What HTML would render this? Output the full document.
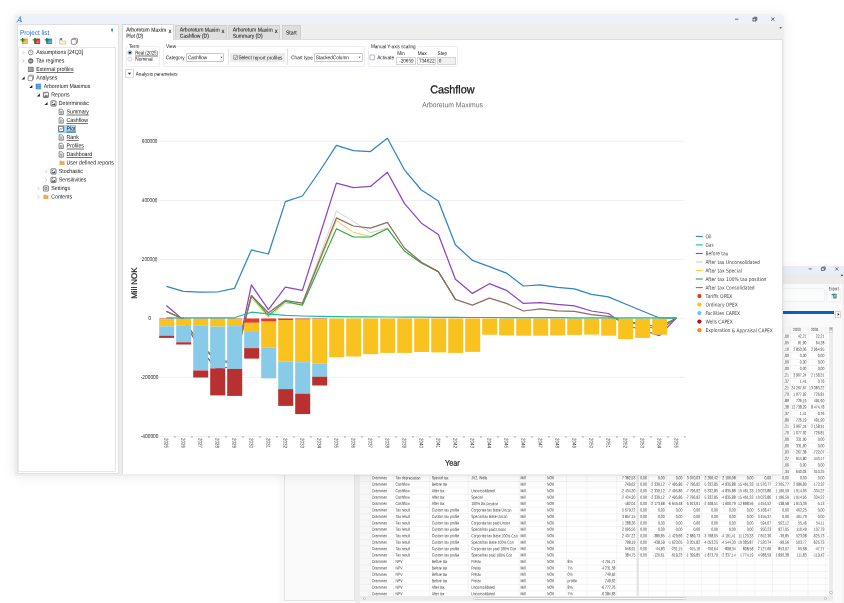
<!DOCTYPE html>
<html lang="en"><head><meta charset="utf-8"><title>Cashflow - Arboretum Maximus</title>
<style>
html,body{margin:0;padding:0;background:#fff;}
body{width:844px;height:603px;position:relative;overflow:hidden;font-family:"Liberation Sans",sans-serif;}
.a{position:absolute;box-sizing:border-box;}
.t{position:absolute;left:0;top:0;white-space:nowrap;transform-origin:0 0;}
#root{position:absolute;left:0;top:0;width:844px;height:603px;overflow:hidden;}
.tl{position:absolute;left:0;top:0;width:844px;height:603px;mix-blend-mode:multiply;}
svg{position:absolute;left:0;top:0;overflow:visible;}
</style></head>
<body>
<div id="root">
<div class="a" id="win2" style="left:281.4px;top:266.0px;width:566.6px;height:345px;background:#f3f3f3;border:0.6px solid #d4d4d4;box-shadow:0 0 8px rgba(0,0,0,0.04);"></div>
<div class="a " style="left:281.40px;top:266.00px;width:566.60px;height:6.70px;background:#e9eff8;"></div>
<div class="a " style="left:281.40px;top:272.70px;width:566.60px;height:11.00px;background:#ececec;"></div>
<div class="a " style="left:281.40px;top:283.70px;width:566.60px;height:330.00px;background:#fafafa;"></div>
<svg width="844" height="603" viewBox="0 0 844 603"><g stroke="#444" stroke-width="0.7" fill="none"><line x1="808.6" y1="268.9" x2="811.8" y2="268.9"/><rect x="821.6" y="267.9" width="2.6" height="2.6"/><path d="M822.6 267.9v-0.9h2.6v2.6h-1"/><path d="M835.2 267.3l3.2 3.2M838.4 267.3l-3.2 3.2"/></g><path d="M840.6 274.8h2.6l-1.3 1.6z" fill="#333"/></svg>
<svg width="844" height="603" viewBox="0 0 844 603"><rect x="600" y="288.6" width="224.5" height="12.8" rx="1.5" fill="#fcfcfc" stroke="#e8ecf1" stroke-width="0.7"/><rect x="826.7" y="289.2" width="13.8" height="12.6" rx="1.5" fill="#fcfcfc" stroke="#e8ecf1" stroke-width="0.7"/><rect x="828.2" y="286.5" width="11" height="5" fill="#fafafa"/><rect x="842.6" y="283.7" width="0.7" height="330" fill="#e8e8e8"/><rect x="831.0" y="293.2" width="5.8" height="5.6" rx="0.4" fill="#f1f1f1"/><rect x="833.2" y="293.8" width="3.4" height="4.6" fill="#2f9a5a"/><path d="M833.9 294.8l2 2.6M835.9 294.8l-2 2.6" stroke="#e9f5ee" stroke-width="0.5"/><path d="M831.2 294.6l2.4 -1.2v2.4z" fill="#2f6fd0"/></svg>
<div class="a " style="left:600.00px;top:311.00px;width:233.70px;height:3.10px;background:#0a5fc4;"></div>
<div class="a " style="left:835.00px;top:311.00px;width:6.20px;height:6.60px;background:#fdfdfd;border:0.6px solid #d2d2d2;border-radius:0.6px;"></div>
<svg width="844" height="603" viewBox="0 0 844 603"><path d="M837.6 312.9l2 1.4l-2 1.4z" fill="#333"/></svg>
<div class="a " style="left:360.40px;top:326.50px;width:468.30px;height:270.90px;background:#ffffff;"></div>
<div class="a " style="left:360.40px;top:326.50px;width:468.30px;height:6.80px;background:#f8f8f8;"></div>
<div class="a " style="left:360.40px;top:326.50px;width:10.30px;height:270.90px;background:#f7f7f7;"></div>
<svg width="844" height="603" viewBox="0 0 844 603"><g stroke="#e6e6e6" stroke-width="0.45"><line x1="360.4" y1="333.48" x2="828.7" y2="333.48"/><line x1="360.4" y1="339.92" x2="828.7" y2="339.92"/><line x1="360.4" y1="346.35" x2="828.7" y2="346.35"/><line x1="360.4" y1="352.79" x2="828.7" y2="352.79"/><line x1="360.4" y1="359.22" x2="828.7" y2="359.22"/><line x1="360.4" y1="365.66" x2="828.7" y2="365.66"/><line x1="360.4" y1="372.09" x2="828.7" y2="372.09"/><line x1="360.4" y1="378.53" x2="828.7" y2="378.53"/><line x1="360.4" y1="384.96" x2="828.7" y2="384.96"/><line x1="360.4" y1="391.40" x2="828.7" y2="391.40"/><line x1="360.4" y1="397.83" x2="828.7" y2="397.83"/><line x1="360.4" y1="404.27" x2="828.7" y2="404.27"/><line x1="360.4" y1="410.70" x2="828.7" y2="410.70"/><line x1="360.4" y1="417.14" x2="828.7" y2="417.14"/><line x1="360.4" y1="423.57" x2="828.7" y2="423.57"/><line x1="360.4" y1="430.01" x2="828.7" y2="430.01"/><line x1="360.4" y1="436.44" x2="828.7" y2="436.44"/><line x1="360.4" y1="442.88" x2="828.7" y2="442.88"/><line x1="360.4" y1="449.31" x2="828.7" y2="449.31"/><line x1="360.4" y1="455.75" x2="828.7" y2="455.75"/><line x1="360.4" y1="462.18" x2="828.7" y2="462.18"/><line x1="360.4" y1="468.62" x2="828.7" y2="468.62"/><line x1="360.4" y1="475.05" x2="828.7" y2="475.05"/><line x1="360.4" y1="481.49" x2="828.7" y2="481.49"/><line x1="360.4" y1="487.92" x2="828.7" y2="487.92"/><line x1="360.4" y1="494.36" x2="828.7" y2="494.36"/><line x1="360.4" y1="500.79" x2="828.7" y2="500.79"/><line x1="360.4" y1="507.23" x2="828.7" y2="507.23"/><line x1="360.4" y1="513.66" x2="828.7" y2="513.66"/><line x1="360.4" y1="520.10" x2="828.7" y2="520.10"/><line x1="360.4" y1="526.53" x2="828.7" y2="526.53"/><line x1="360.4" y1="532.97" x2="828.7" y2="532.97"/><line x1="360.4" y1="539.40" x2="828.7" y2="539.40"/><line x1="360.4" y1="545.84" x2="828.7" y2="545.84"/><line x1="360.4" y1="552.27" x2="828.7" y2="552.27"/><line x1="360.4" y1="558.71" x2="828.7" y2="558.71"/><line x1="360.4" y1="565.14" x2="828.7" y2="565.14"/><line x1="360.4" y1="571.58" x2="828.7" y2="571.58"/><line x1="360.4" y1="578.01" x2="828.7" y2="578.01"/><line x1="360.4" y1="584.45" x2="828.7" y2="584.45"/><line x1="360.4" y1="590.88" x2="828.7" y2="590.88"/><line x1="360.4" y1="597.32" x2="828.7" y2="597.32"/><line x1="370.70" y1="326.5" x2="370.70" y2="597.40"/><line x1="393.60" y1="326.5" x2="393.60" y2="597.40"/><line x1="429.60" y1="326.5" x2="429.60" y2="597.40"/><line x1="468.30" y1="326.5" x2="468.30" y2="597.40"/><line x1="519.00" y1="326.5" x2="519.00" y2="597.40"/><line x1="545.80" y1="326.5" x2="545.80" y2="597.40"/><line x1="566.50" y1="326.5" x2="566.50" y2="597.40"/><line x1="586.90" y1="326.5" x2="586.90" y2="597.40"/><line x1="616.70" y1="326.5" x2="616.70" y2="597.40"/><line x1="648.40" y1="326.5" x2="648.40" y2="597.40"/><line x1="666.14" y1="326.5" x2="666.14" y2="597.40"/><line x1="683.88" y1="326.5" x2="683.88" y2="597.40"/><line x1="701.62" y1="326.5" x2="701.62" y2="597.40"/><line x1="719.36" y1="326.5" x2="719.36" y2="597.40"/><line x1="737.10" y1="326.5" x2="737.10" y2="597.40"/><line x1="754.84" y1="326.5" x2="754.84" y2="597.40"/><line x1="772.58" y1="326.5" x2="772.58" y2="597.40"/><line x1="790.32" y1="326.5" x2="790.32" y2="597.40"/><line x1="808.06" y1="326.5" x2="808.06" y2="597.40"/><line x1="825.80" y1="326.5" x2="825.80" y2="597.40"/></g><rect x="636.6" y="326.5" width="2.2" height="270.90" fill="#e3e3e3"/></svg>
<div class="a " style="left:828.90px;top:326.50px;width:4.30px;height:270.00px;background:#ececec;"></div>
<div class="a " style="left:829.10px;top:326.70px;width:3.90px;height:3.40px;background:#fdfdfd;border:0.5px solid #c8c8c8;"></div>
<div class="a " style="left:829.10px;top:330.30px;width:3.90px;height:2.60px;background:#fdfdfd;border:0.5px solid #d8d8d8;"></div>
<svg width="844" height="603" viewBox="0 0 844 603"><path d="M830.2 328l1.8 0l-0.9 1.1z" fill="#444"/></svg>
<div class="a " style="left:829.30px;top:590.60px;width:3.60px;height:3.60px;background:#fdfdfd;border:0.5px solid #bdbdbd;border-radius:2px;"></div>
<div class="a " style="left:360.40px;top:596.40px;width:472.80px;height:4.60px;background:#ececec;"></div>
<div class="a " style="left:362.60px;top:596.60px;width:3.60px;height:3.60px;background:#fdfdfd;border:0.5px solid #bdbdbd;border-radius:2px;"></div>
<div class="a " style="left:823.80px;top:596.60px;width:3.60px;height:3.60px;background:#fdfdfd;border:0.5px solid #bdbdbd;border-radius:2px;"></div>
<div class="a " style="left:473.30px;top:597.00px;width:212.40px;height:3.40px;background:#fbfbfb;border:0.5px solid #cfcfcf;border-radius:1.5px;"></div>
<div class="a " style="left:284.20px;top:283.70px;width:70.60px;height:317.00px;background:#fafafa;border:0.6px solid #e2e2e2;"></div>
<div class="a " style="left:354.80px;top:283.70px;width:5.60px;height:330.00px;background:#ececec;"></div>
<div class="tl"><span class="t" style="font-size:4.8px;line-height:4.8px;color:#222;transform:translate(828.70px,287.34px) rotate(0.2deg) scaleX(0.7208);">Export</span>
<span class="t" style="font-size:4.5px;line-height:4.5px;color:#3a3a3a;transform:translate(793.00px,327.96px) rotate(0.2deg) scaleX(0.7600);">2033</span>
<span class="t" style="font-size:4.5px;line-height:4.5px;color:#3a3a3a;transform:translate(810.90px,327.96px) rotate(0.2deg) scaleX(0.7600);">2034</span>
<span class="t" style="font-size:4.5px;line-height:4.5px;color:#3a3a3a;transform:translate(784.05px,334.76px) rotate(0.2deg) scaleX(0.7600);">,00</span>
<span class="t" style="font-size:4.5px;line-height:4.5px;color:#3a3a3a;transform:translate(797.94px,334.76px) rotate(0.2deg) scaleX(0.7600);">42,27</span>
<span class="t" style="font-size:4.5px;line-height:4.5px;color:#3a3a3a;transform:translate(815.74px,334.76px) rotate(0.2deg) scaleX(0.7600);">22,21</span>
<span class="t" style="font-size:4.5px;line-height:4.5px;color:#3a3a3a;transform:translate(784.05px,341.20px) rotate(0.2deg) scaleX(0.7600);">,05</span>
<span class="t" style="font-size:4.5px;line-height:4.5px;color:#3a3a3a;transform:translate(797.94px,341.20px) rotate(0.2deg) scaleX(0.7600);">91,90</span>
<span class="t" style="font-size:4.5px;line-height:4.5px;color:#3a3a3a;transform:translate(815.74px,341.20px) rotate(0.2deg) scaleX(0.7600);">64,28</span>
<span class="t" style="font-size:4.5px;line-height:4.5px;color:#3a3a3a;transform:translate(784.05px,347.63px) rotate(0.2deg) scaleX(0.7600);">,10</span>
<span class="t" style="font-size:4.5px;line-height:4.5px;color:#3a3a3a;transform:translate(793.19px,347.63px) rotate(0.2deg) scaleX(0.7600);">2 850,06</span>
<span class="t" style="font-size:4.5px;line-height:4.5px;color:#3a3a3a;transform:translate(810.99px,347.63px) rotate(0.2deg) scaleX(0.7600);">2 964,95</span>
<span class="t" style="font-size:4.5px;line-height:4.5px;color:#3a3a3a;transform:translate(784.05px,354.07px) rotate(0.2deg) scaleX(0.7600);">,00</span>
<span class="t" style="font-size:4.5px;line-height:4.5px;color:#3a3a3a;transform:translate(799.84px,354.07px) rotate(0.2deg) scaleX(0.7600);">0,00</span>
<span class="t" style="font-size:4.5px;line-height:4.5px;color:#3a3a3a;transform:translate(817.64px,354.07px) rotate(0.2deg) scaleX(0.7600);">0,00</span>
<span class="t" style="font-size:4.5px;line-height:4.5px;color:#3a3a3a;transform:translate(784.05px,360.50px) rotate(0.2deg) scaleX(0.7600);">,00</span>
<span class="t" style="font-size:4.5px;line-height:4.5px;color:#3a3a3a;transform:translate(799.84px,360.50px) rotate(0.2deg) scaleX(0.7600);">0,00</span>
<span class="t" style="font-size:4.5px;line-height:4.5px;color:#3a3a3a;transform:translate(817.64px,360.50px) rotate(0.2deg) scaleX(0.7600);">0,00</span>
<span class="t" style="font-size:4.5px;line-height:4.5px;color:#3a3a3a;transform:translate(784.05px,366.94px) rotate(0.2deg) scaleX(0.7600);">,00</span>
<span class="t" style="font-size:4.5px;line-height:4.5px;color:#3a3a3a;transform:translate(799.84px,366.94px) rotate(0.2deg) scaleX(0.7600);">0,00</span>
<span class="t" style="font-size:4.5px;line-height:4.5px;color:#3a3a3a;transform:translate(817.64px,366.94px) rotate(0.2deg) scaleX(0.7600);">0,00</span>
<span class="t" style="font-size:4.5px;line-height:4.5px;color:#3a3a3a;transform:translate(784.05px,373.38px) rotate(0.2deg) scaleX(0.7600);">,21</span>
<span class="t" style="font-size:4.5px;line-height:4.5px;color:#3a3a3a;transform:translate(793.19px,373.38px) rotate(0.2deg) scaleX(0.7600);">3 967,24</span>
<span class="t" style="font-size:4.5px;line-height:4.5px;color:#3a3a3a;transform:translate(810.99px,373.38px) rotate(0.2deg) scaleX(0.7600);">2 158,31</span>
<span class="t" style="font-size:4.5px;line-height:4.5px;color:#3a3a3a;transform:translate(784.05px,379.81px) rotate(0.2deg) scaleX(0.7600);">,37</span>
<span class="t" style="font-size:4.5px;line-height:4.5px;color:#3a3a3a;transform:translate(799.84px,379.81px) rotate(0.2deg) scaleX(0.7600);">1,41</span>
<span class="t" style="font-size:4.5px;line-height:4.5px;color:#3a3a3a;transform:translate(817.64px,379.81px) rotate(0.2deg) scaleX(0.7600);">0,76</span>
<span class="t" style="font-size:4.5px;line-height:4.5px;color:#3a3a3a;transform:translate(784.05px,386.25px) rotate(0.2deg) scaleX(0.7600);">,21</span>
<span class="t" style="font-size:4.5px;line-height:4.5px;color:#3a3a3a;transform:translate(791.29px,386.25px) rotate(0.2deg) scaleX(0.7600);">24 267,67</span>
<span class="t" style="font-size:4.5px;line-height:4.5px;color:#3a3a3a;transform:translate(809.09px,386.25px) rotate(0.2deg) scaleX(0.7600);">13 083,22</span>
<span class="t" style="font-size:4.5px;line-height:4.5px;color:#3a3a3a;transform:translate(784.05px,392.68px) rotate(0.2deg) scaleX(0.7600);">,70</span>
<span class="t" style="font-size:4.5px;line-height:4.5px;color:#3a3a3a;transform:translate(793.19px,392.68px) rotate(0.2deg) scaleX(0.7600);">1 077,92</span>
<span class="t" style="font-size:4.5px;line-height:4.5px;color:#3a3a3a;transform:translate(813.84px,392.68px) rotate(0.2deg) scaleX(0.7600);">726,81</span>
<span class="t" style="font-size:4.5px;line-height:4.5px;color:#3a3a3a;transform:translate(784.05px,399.11px) rotate(0.2deg) scaleX(0.7600);">,89</span>
<span class="t" style="font-size:4.5px;line-height:4.5px;color:#3a3a3a;transform:translate(796.04px,399.11px) rotate(0.2deg) scaleX(0.7600);">726,19</span>
<span class="t" style="font-size:4.5px;line-height:4.5px;color:#3a3a3a;transform:translate(813.84px,399.11px) rotate(0.2deg) scaleX(0.7600);">491,90</span>
<span class="t" style="font-size:4.5px;line-height:4.5px;color:#3a3a3a;transform:translate(784.05px,405.55px) rotate(0.2deg) scaleX(0.7600);">,38</span>
<span class="t" style="font-size:4.5px;line-height:4.5px;color:#3a3a3a;transform:translate(791.29px,405.55px) rotate(0.2deg) scaleX(0.7600);">12 738,29</span>
<span class="t" style="font-size:4.5px;line-height:4.5px;color:#3a3a3a;transform:translate(810.99px,405.55px) rotate(0.2deg) scaleX(0.7600);">8 474,78</span>
<span class="t" style="font-size:4.5px;line-height:4.5px;color:#3a3a3a;transform:translate(784.05px,411.98px) rotate(0.2deg) scaleX(0.7600);">,37</span>
<span class="t" style="font-size:4.5px;line-height:4.5px;color:#3a3a3a;transform:translate(799.84px,411.98px) rotate(0.2deg) scaleX(0.7600);">1,41</span>
<span class="t" style="font-size:4.5px;line-height:4.5px;color:#3a3a3a;transform:translate(817.64px,411.98px) rotate(0.2deg) scaleX(0.7600);">0,76</span>
<span class="t" style="font-size:4.5px;line-height:4.5px;color:#3a3a3a;transform:translate(784.05px,418.42px) rotate(0.2deg) scaleX(0.7600);">,89</span>
<span class="t" style="font-size:4.5px;line-height:4.5px;color:#3a3a3a;transform:translate(796.04px,418.42px) rotate(0.2deg) scaleX(0.7600);">726,19</span>
<span class="t" style="font-size:4.5px;line-height:4.5px;color:#3a3a3a;transform:translate(813.84px,418.42px) rotate(0.2deg) scaleX(0.7600);">491,90</span>
<span class="t" style="font-size:4.5px;line-height:4.5px;color:#3a3a3a;transform:translate(784.05px,424.85px) rotate(0.2deg) scaleX(0.7600);">,21</span>
<span class="t" style="font-size:4.5px;line-height:4.5px;color:#3a3a3a;transform:translate(793.19px,424.85px) rotate(0.2deg) scaleX(0.7600);">3 967,24</span>
<span class="t" style="font-size:4.5px;line-height:4.5px;color:#3a3a3a;transform:translate(810.99px,424.85px) rotate(0.2deg) scaleX(0.7600);">2 158,31</span>
<span class="t" style="font-size:4.5px;line-height:4.5px;color:#3a3a3a;transform:translate(784.05px,431.29px) rotate(0.2deg) scaleX(0.7600);">,70</span>
<span class="t" style="font-size:4.5px;line-height:4.5px;color:#3a3a3a;transform:translate(793.19px,431.29px) rotate(0.2deg) scaleX(0.7600);">1 077,92</span>
<span class="t" style="font-size:4.5px;line-height:4.5px;color:#3a3a3a;transform:translate(813.84px,431.29px) rotate(0.2deg) scaleX(0.7600);">726,81</span>
<span class="t" style="font-size:4.5px;line-height:4.5px;color:#3a3a3a;transform:translate(784.05px,437.72px) rotate(0.2deg) scaleX(0.7600);">,00</span>
<span class="t" style="font-size:4.5px;line-height:4.5px;color:#3a3a3a;transform:translate(796.04px,437.72px) rotate(0.2deg) scaleX(0.7600);">331,90</span>
<span class="t" style="font-size:4.5px;line-height:4.5px;color:#3a3a3a;transform:translate(817.64px,437.72px) rotate(0.2deg) scaleX(0.7600);">0,00</span>
<span class="t" style="font-size:4.5px;line-height:4.5px;color:#3a3a3a;transform:translate(784.05px,444.16px) rotate(0.2deg) scaleX(0.7600);">,00</span>
<span class="t" style="font-size:4.5px;line-height:4.5px;color:#3a3a3a;transform:translate(796.04px,444.16px) rotate(0.2deg) scaleX(0.7600);">331,90</span>
<span class="t" style="font-size:4.5px;line-height:4.5px;color:#3a3a3a;transform:translate(817.64px,444.16px) rotate(0.2deg) scaleX(0.7600);">0,00</span>
<span class="t" style="font-size:4.5px;line-height:4.5px;color:#3a3a3a;transform:translate(784.05px,450.59px) rotate(0.2deg) scaleX(0.7600);">,93</span>
<span class="t" style="font-size:4.5px;line-height:4.5px;color:#3a3a3a;transform:translate(796.04px,450.59px) rotate(0.2deg) scaleX(0.7600);">267,38</span>
<span class="t" style="font-size:4.5px;line-height:4.5px;color:#3a3a3a;transform:translate(812.70px,450.59px) rotate(0.2deg) scaleX(0.7600);">-722,07</span>
<span class="t" style="font-size:4.5px;line-height:4.5px;color:#3a3a3a;transform:translate(784.05px,457.03px) rotate(0.2deg) scaleX(0.7600);">,27</span>
<span class="t" style="font-size:4.5px;line-height:4.5px;color:#3a3a3a;transform:translate(796.04px,457.03px) rotate(0.2deg) scaleX(0.7600);">914,80</span>
<span class="t" style="font-size:4.5px;line-height:4.5px;color:#3a3a3a;transform:translate(813.84px,457.03px) rotate(0.2deg) scaleX(0.7600);">443,17</span>
<span class="t" style="font-size:4.5px;line-height:4.5px;color:#3a3a3a;transform:translate(784.05px,463.46px) rotate(0.2deg) scaleX(0.7600);">,00</span>
<span class="t" style="font-size:4.5px;line-height:4.5px;color:#3a3a3a;transform:translate(799.84px,463.46px) rotate(0.2deg) scaleX(0.7600);">0,00</span>
<span class="t" style="font-size:4.5px;line-height:4.5px;color:#3a3a3a;transform:translate(817.64px,463.46px) rotate(0.2deg) scaleX(0.7600);">0,00</span>
<span class="t" style="font-size:4.5px;line-height:4.5px;color:#3a3a3a;transform:translate(784.05px,469.90px) rotate(0.2deg) scaleX(0.7600);">,34</span>
<span class="t" style="font-size:4.5px;line-height:4.5px;color:#3a3a3a;transform:translate(796.04px,469.90px) rotate(0.2deg) scaleX(0.7600);">640,03</span>
<span class="t" style="font-size:4.5px;line-height:4.5px;color:#3a3a3a;transform:translate(813.84px,469.90px) rotate(0.2deg) scaleX(0.7600);">310,25</span>
<span class="t" style="font-size:4.5px;line-height:4.5px;color:#3a3a3a;transform:translate(827.30px,450.59px) rotate(0.2deg) scaleX(0.7600);">-</span>
<span class="t" style="font-size:4.5px;line-height:4.5px;color:#3a3a3a;transform:translate(372.00px,476.33px) rotate(0.2deg) scaleX(0.7600);">Drammen</span>
<span class="t" style="font-size:4.5px;line-height:4.5px;color:#3a3a3a;transform:translate(395.60px,476.33px) rotate(0.2deg) scaleX(0.7600);">Tax depreciation</span>
<span class="t" style="font-size:4.5px;line-height:4.5px;color:#3a3a3a;transform:translate(431.70px,476.33px) rotate(0.2deg) scaleX(0.7600);">Special tax</span>
<span class="t" style="font-size:4.5px;line-height:4.5px;color:#3a3a3a;transform:translate(471.20px,476.33px) rotate(0.2deg) scaleX(0.7600);">JV2, Wells</span>
<span class="t" style="font-size:4.5px;line-height:4.5px;color:#3a3a3a;transform:translate(520.40px,476.33px) rotate(0.2deg) scaleX(0.7600);">Mill</span>
<span class="t" style="font-size:4.5px;line-height:4.5px;color:#3a3a3a;transform:translate(547.00px,476.33px) rotate(0.2deg) scaleX(0.7600);">NOK</span>
<span class="t" style="font-size:4.5px;line-height:4.5px;color:#3a3a3a;transform:translate(622.09px,476.33px) rotate(0.2deg) scaleX(0.7600);">7 382,53</span>
<span class="t" style="font-size:4.5px;line-height:4.5px;color:#3a3a3a;transform:translate(640.24px,476.33px) rotate(0.2deg) scaleX(0.7600);">0,00</span>
<span class="t" style="font-size:4.5px;line-height:4.5px;color:#3a3a3a;transform:translate(657.98px,476.33px) rotate(0.2deg) scaleX(0.7600);">0,00</span>
<span class="t" style="font-size:4.5px;line-height:4.5px;color:#3a3a3a;transform:translate(675.72px,476.33px) rotate(0.2deg) scaleX(0.7600);">0,00</span>
<span class="t" style="font-size:4.5px;line-height:4.5px;color:#3a3a3a;transform:translate(686.81px,476.33px) rotate(0.2deg) scaleX(0.7600);">3 070,03</span>
<span class="t" style="font-size:4.5px;line-height:4.5px;color:#3a3a3a;transform:translate(704.55px,476.33px) rotate(0.2deg) scaleX(0.7600);">2 206,42</span>
<span class="t" style="font-size:4.5px;line-height:4.5px;color:#3a3a3a;transform:translate(722.29px,476.33px) rotate(0.2deg) scaleX(0.7600);">2 106,08</span>
<span class="t" style="font-size:4.5px;line-height:4.5px;color:#3a3a3a;transform:translate(746.68px,476.33px) rotate(0.2deg) scaleX(0.7600);">0,00</span>
<span class="t" style="font-size:4.5px;line-height:4.5px;color:#3a3a3a;transform:translate(764.42px,476.33px) rotate(0.2deg) scaleX(0.7600);">0,00</span>
<span class="t" style="font-size:4.5px;line-height:4.5px;color:#3a3a3a;transform:translate(782.16px,476.33px) rotate(0.2deg) scaleX(0.7600);">0,00</span>
<span class="t" style="font-size:4.5px;line-height:4.5px;color:#3a3a3a;transform:translate(799.90px,476.33px) rotate(0.2deg) scaleX(0.7600);">0,00</span>
<span class="t" style="font-size:4.5px;line-height:4.5px;color:#3a3a3a;transform:translate(817.64px,476.33px) rotate(0.2deg) scaleX(0.7600);">0,00</span>
<span class="t" style="font-size:4.5px;line-height:4.5px;color:#3a3a3a;transform:translate(372.00px,482.77px) rotate(0.2deg) scaleX(0.7600);">Drammen</span>
<span class="t" style="font-size:4.5px;line-height:4.5px;color:#3a3a3a;transform:translate(395.60px,482.77px) rotate(0.2deg) scaleX(0.7600);">Cashflow</span>
<span class="t" style="font-size:4.5px;line-height:4.5px;color:#3a3a3a;transform:translate(431.70px,482.77px) rotate(0.2deg) scaleX(0.7600);">Before tax</span>
<span class="t" style="font-size:4.5px;line-height:4.5px;color:#3a3a3a;transform:translate(520.40px,482.77px) rotate(0.2deg) scaleX(0.7600);">Mill</span>
<span class="t" style="font-size:4.5px;line-height:4.5px;color:#3a3a3a;transform:translate(547.00px,482.77px) rotate(0.2deg) scaleX(0.7600);">NOK</span>
<span class="t" style="font-size:4.5px;line-height:4.5px;color:#3a3a3a;transform:translate(624.94px,482.77px) rotate(0.2deg) scaleX(0.7600);">749,62</span>
<span class="t" style="font-size:4.5px;line-height:4.5px;color:#3a3a3a;transform:translate(640.24px,482.77px) rotate(0.2deg) scaleX(0.7600);">0,00</span>
<span class="t" style="font-size:4.5px;line-height:4.5px;color:#3a3a3a;transform:translate(650.19px,482.77px) rotate(0.2deg) scaleX(0.7600);">-2 339,12</span>
<span class="t" style="font-size:4.5px;line-height:4.5px;color:#3a3a3a;transform:translate(667.93px,482.77px) rotate(0.2deg) scaleX(0.7600);">-7 495,86</span>
<span class="t" style="font-size:4.5px;line-height:4.5px;color:#3a3a3a;transform:translate(685.67px,482.77px) rotate(0.2deg) scaleX(0.7600);">-7 796,92</span>
<span class="t" style="font-size:4.5px;line-height:4.5px;color:#3a3a3a;transform:translate(703.41px,482.77px) rotate(0.2deg) scaleX(0.7600);">-5 332,85</span>
<span class="t" style="font-size:4.5px;line-height:4.5px;color:#3a3a3a;transform:translate(721.15px,482.77px) rotate(0.2deg) scaleX(0.7600);">-4 835,88</span>
<span class="t" style="font-size:4.5px;line-height:4.5px;color:#3a3a3a;transform:translate(738.13px,482.77px) rotate(0.2deg) scaleX(0.7600);">15 461,33</span>
<span class="t" style="font-size:4.5px;line-height:4.5px;color:#3a3a3a;transform:translate(756.12px,482.77px) rotate(0.2deg) scaleX(0.7600);">11 570,77</span>
<span class="t" style="font-size:4.5px;line-height:4.5px;color:#3a3a3a;transform:translate(775.51px,482.77px) rotate(0.2deg) scaleX(0.7600);">2 705,77</span>
<span class="t" style="font-size:4.5px;line-height:4.5px;color:#3a3a3a;transform:translate(793.25px,482.77px) rotate(0.2deg) scaleX(0.7600);">2 086,80</span>
<span class="t" style="font-size:4.5px;line-height:4.5px;color:#3a3a3a;transform:translate(812.70px,482.77px) rotate(0.2deg) scaleX(0.7600);">-172,32</span>
<span class="t" style="font-size:4.5px;line-height:4.5px;color:#3a3a3a;transform:translate(827.30px,482.77px) rotate(0.2deg) scaleX(0.7600);">-</span>
<span class="t" style="font-size:4.5px;line-height:4.5px;color:#3a3a3a;transform:translate(372.00px,489.20px) rotate(0.2deg) scaleX(0.7600);">Drammen</span>
<span class="t" style="font-size:4.5px;line-height:4.5px;color:#3a3a3a;transform:translate(395.60px,489.20px) rotate(0.2deg) scaleX(0.7600);">Cashflow</span>
<span class="t" style="font-size:4.5px;line-height:4.5px;color:#3a3a3a;transform:translate(431.70px,489.20px) rotate(0.2deg) scaleX(0.7600);">After tax</span>
<span class="t" style="font-size:4.5px;line-height:4.5px;color:#3a3a3a;transform:translate(471.20px,489.20px) rotate(0.2deg) scaleX(0.7600);">Unconsolidated</span>
<span class="t" style="font-size:4.5px;line-height:4.5px;color:#3a3a3a;transform:translate(520.40px,489.20px) rotate(0.2deg) scaleX(0.7600);">Mill</span>
<span class="t" style="font-size:4.5px;line-height:4.5px;color:#3a3a3a;transform:translate(547.00px,489.20px) rotate(0.2deg) scaleX(0.7600);">NOK</span>
<span class="t" style="font-size:4.5px;line-height:4.5px;color:#3a3a3a;transform:translate(620.95px,489.20px) rotate(0.2deg) scaleX(0.7600);">-2 434,30</span>
<span class="t" style="font-size:4.5px;line-height:4.5px;color:#3a3a3a;transform:translate(640.24px,489.20px) rotate(0.2deg) scaleX(0.7600);">0,00</span>
<span class="t" style="font-size:4.5px;line-height:4.5px;color:#3a3a3a;transform:translate(650.19px,489.20px) rotate(0.2deg) scaleX(0.7600);">-2 339,12</span>
<span class="t" style="font-size:4.5px;line-height:4.5px;color:#3a3a3a;transform:translate(667.93px,489.20px) rotate(0.2deg) scaleX(0.7600);">-7 495,86</span>
<span class="t" style="font-size:4.5px;line-height:4.5px;color:#3a3a3a;transform:translate(685.67px,489.20px) rotate(0.2deg) scaleX(0.7600);">-7 796,92</span>
<span class="t" style="font-size:4.5px;line-height:4.5px;color:#3a3a3a;transform:translate(703.41px,489.20px) rotate(0.2deg) scaleX(0.7600);">-5 332,85</span>
<span class="t" style="font-size:4.5px;line-height:4.5px;color:#3a3a3a;transform:translate(721.15px,489.20px) rotate(0.2deg) scaleX(0.7600);">-4 835,88</span>
<span class="t" style="font-size:4.5px;line-height:4.5px;color:#3a3a3a;transform:translate(738.13px,489.20px) rotate(0.2deg) scaleX(0.7600);">15 461,33</span>
<span class="t" style="font-size:4.5px;line-height:4.5px;color:#3a3a3a;transform:translate(755.87px,489.20px) rotate(0.2deg) scaleX(0.7600);">10 023,86</span>
<span class="t" style="font-size:4.5px;line-height:4.5px;color:#3a3a3a;transform:translate(775.51px,489.20px) rotate(0.2deg) scaleX(0.7600);">1 196,59</span>
<span class="t" style="font-size:4.5px;line-height:4.5px;color:#3a3a3a;transform:translate(793.25px,489.20px) rotate(0.2deg) scaleX(0.7600);">1 914,95</span>
<span class="t" style="font-size:4.5px;line-height:4.5px;color:#3a3a3a;transform:translate(812.70px,489.20px) rotate(0.2deg) scaleX(0.7600);">-334,22</span>
<span class="t" style="font-size:4.5px;line-height:4.5px;color:#3a3a3a;transform:translate(827.30px,489.20px) rotate(0.2deg) scaleX(0.7600);">-</span>
<span class="t" style="font-size:4.5px;line-height:4.5px;color:#3a3a3a;transform:translate(372.00px,495.64px) rotate(0.2deg) scaleX(0.7600);">Drammen</span>
<span class="t" style="font-size:4.5px;line-height:4.5px;color:#3a3a3a;transform:translate(395.60px,495.64px) rotate(0.2deg) scaleX(0.7600);">Cashflow</span>
<span class="t" style="font-size:4.5px;line-height:4.5px;color:#3a3a3a;transform:translate(431.70px,495.64px) rotate(0.2deg) scaleX(0.7600);">After tax</span>
<span class="t" style="font-size:4.5px;line-height:4.5px;color:#3a3a3a;transform:translate(471.20px,495.64px) rotate(0.2deg) scaleX(0.7600);">Special</span>
<span class="t" style="font-size:4.5px;line-height:4.5px;color:#3a3a3a;transform:translate(520.40px,495.64px) rotate(0.2deg) scaleX(0.7600);">Mill</span>
<span class="t" style="font-size:4.5px;line-height:4.5px;color:#3a3a3a;transform:translate(547.00px,495.64px) rotate(0.2deg) scaleX(0.7600);">NOK</span>
<span class="t" style="font-size:4.5px;line-height:4.5px;color:#3a3a3a;transform:translate(620.95px,495.64px) rotate(0.2deg) scaleX(0.7600);">-2 434,30</span>
<span class="t" style="font-size:4.5px;line-height:4.5px;color:#3a3a3a;transform:translate(640.24px,495.64px) rotate(0.2deg) scaleX(0.7600);">0,00</span>
<span class="t" style="font-size:4.5px;line-height:4.5px;color:#3a3a3a;transform:translate(650.19px,495.64px) rotate(0.2deg) scaleX(0.7600);">-2 339,12</span>
<span class="t" style="font-size:4.5px;line-height:4.5px;color:#3a3a3a;transform:translate(667.93px,495.64px) rotate(0.2deg) scaleX(0.7600);">-7 495,86</span>
<span class="t" style="font-size:4.5px;line-height:4.5px;color:#3a3a3a;transform:translate(685.67px,495.64px) rotate(0.2deg) scaleX(0.7600);">-7 796,92</span>
<span class="t" style="font-size:4.5px;line-height:4.5px;color:#3a3a3a;transform:translate(703.41px,495.64px) rotate(0.2deg) scaleX(0.7600);">-5 332,85</span>
<span class="t" style="font-size:4.5px;line-height:4.5px;color:#3a3a3a;transform:translate(721.15px,495.64px) rotate(0.2deg) scaleX(0.7600);">-4 835,88</span>
<span class="t" style="font-size:4.5px;line-height:4.5px;color:#3a3a3a;transform:translate(738.13px,495.64px) rotate(0.2deg) scaleX(0.7600);">15 461,33</span>
<span class="t" style="font-size:4.5px;line-height:4.5px;color:#3a3a3a;transform:translate(755.87px,495.64px) rotate(0.2deg) scaleX(0.7600);">10 023,86</span>
<span class="t" style="font-size:4.5px;line-height:4.5px;color:#3a3a3a;transform:translate(775.51px,495.64px) rotate(0.2deg) scaleX(0.7600);">1 196,59</span>
<span class="t" style="font-size:4.5px;line-height:4.5px;color:#3a3a3a;transform:translate(793.25px,495.64px) rotate(0.2deg) scaleX(0.7600);">1 914,95</span>
<span class="t" style="font-size:4.5px;line-height:4.5px;color:#3a3a3a;transform:translate(812.70px,495.64px) rotate(0.2deg) scaleX(0.7600);">-334,22</span>
<span class="t" style="font-size:4.5px;line-height:4.5px;color:#3a3a3a;transform:translate(827.30px,495.64px) rotate(0.2deg) scaleX(0.7600);">-</span>
<span class="t" style="font-size:4.5px;line-height:4.5px;color:#3a3a3a;transform:translate(372.00px,502.07px) rotate(0.2deg) scaleX(0.7600);">Drammen</span>
<span class="t" style="font-size:4.5px;line-height:4.5px;color:#3a3a3a;transform:translate(395.60px,502.07px) rotate(0.2deg) scaleX(0.7600);">Cashflow</span>
<span class="t" style="font-size:4.5px;line-height:4.5px;color:#3a3a3a;transform:translate(431.70px,502.07px) rotate(0.2deg) scaleX(0.7600);">After tax</span>
<span class="t" style="font-size:4.5px;line-height:4.5px;color:#3a3a3a;transform:translate(471.20px,502.07px) rotate(0.2deg) scaleX(0.7600);">100% tax position</span>
<span class="t" style="font-size:4.5px;line-height:4.5px;color:#3a3a3a;transform:translate(520.40px,502.07px) rotate(0.2deg) scaleX(0.7600);">Mill</span>
<span class="t" style="font-size:4.5px;line-height:4.5px;color:#3a3a3a;transform:translate(547.00px,502.07px) rotate(0.2deg) scaleX(0.7600);">NOK</span>
<span class="t" style="font-size:4.5px;line-height:4.5px;color:#3a3a3a;transform:translate(623.80px,502.07px) rotate(0.2deg) scaleX(0.7600);">-182,04</span>
<span class="t" style="font-size:4.5px;line-height:4.5px;color:#3a3a3a;transform:translate(640.24px,502.07px) rotate(0.2deg) scaleX(0.7600);">0,00</span>
<span class="t" style="font-size:4.5px;line-height:4.5px;color:#3a3a3a;transform:translate(650.19px,502.07px) rotate(0.2deg) scaleX(0.7600);">-2 173,68</span>
<span class="t" style="font-size:4.5px;line-height:4.5px;color:#3a3a3a;transform:translate(667.93px,502.07px) rotate(0.2deg) scaleX(0.7600);">-6 645,48</span>
<span class="t" style="font-size:4.5px;line-height:4.5px;color:#3a3a3a;transform:translate(685.67px,502.07px) rotate(0.2deg) scaleX(0.7600);">-5 913,91</span>
<span class="t" style="font-size:4.5px;line-height:4.5px;color:#3a3a3a;transform:translate(703.41px,502.07px) rotate(0.2deg) scaleX(0.7600);">-2 408,51</span>
<span class="t" style="font-size:4.5px;line-height:4.5px;color:#3a3a3a;transform:translate(721.15px,502.07px) rotate(0.2deg) scaleX(0.7600);">-1 600,79</span>
<span class="t" style="font-size:4.5px;line-height:4.5px;color:#3a3a3a;transform:translate(738.13px,502.07px) rotate(0.2deg) scaleX(0.7600);">12 898,56</span>
<span class="t" style="font-size:4.5px;line-height:4.5px;color:#3a3a3a;transform:translate(757.77px,502.07px) rotate(0.2deg) scaleX(0.7600);">4 454,52</span>
<span class="t" style="font-size:4.5px;line-height:4.5px;color:#3a3a3a;transform:translate(777.22px,502.07px) rotate(0.2deg) scaleX(0.7600);">-138,58</span>
<span class="t" style="font-size:4.5px;line-height:4.5px;color:#3a3a3a;transform:translate(793.25px,502.07px) rotate(0.2deg) scaleX(0.7600);">1 913,39</span>
<span class="t" style="font-size:4.5px;line-height:4.5px;color:#3a3a3a;transform:translate(816.50px,502.07px) rotate(0.2deg) scaleX(0.7600);">-5,13</span>
<span class="t" style="font-size:4.5px;line-height:4.5px;color:#3a3a3a;transform:translate(827.30px,502.07px) rotate(0.2deg) scaleX(0.7600);">-</span>
<span class="t" style="font-size:4.5px;line-height:4.5px;color:#3a3a3a;transform:translate(372.00px,508.51px) rotate(0.2deg) scaleX(0.7600);">Drammen</span>
<span class="t" style="font-size:4.5px;line-height:4.5px;color:#3a3a3a;transform:translate(395.60px,508.51px) rotate(0.2deg) scaleX(0.7600);">Tax result</span>
<span class="t" style="font-size:4.5px;line-height:4.5px;color:#3a3a3a;transform:translate(431.70px,508.51px) rotate(0.2deg) scaleX(0.7600);">Custom tax profile</span>
<span class="t" style="font-size:4.5px;line-height:4.5px;color:#3a3a3a;transform:translate(471.20px,508.51px) rotate(0.2deg) scaleX(0.7600);">Corporate tax Base Uncon</span>
<span class="t" style="font-size:4.5px;line-height:4.5px;color:#3a3a3a;transform:translate(520.40px,508.51px) rotate(0.2deg) scaleX(0.7600);">Mill</span>
<span class="t" style="font-size:4.5px;line-height:4.5px;color:#3a3a3a;transform:translate(547.00px,508.51px) rotate(0.2deg) scaleX(0.7600);">NOK</span>
<span class="t" style="font-size:4.5px;line-height:4.5px;color:#3a3a3a;transform:translate(622.09px,508.51px) rotate(0.2deg) scaleX(0.7600);">5 679,72</span>
<span class="t" style="font-size:4.5px;line-height:4.5px;color:#3a3a3a;transform:translate(640.24px,508.51px) rotate(0.2deg) scaleX(0.7600);">0,00</span>
<span class="t" style="font-size:4.5px;line-height:4.5px;color:#3a3a3a;transform:translate(657.98px,508.51px) rotate(0.2deg) scaleX(0.7600);">0,00</span>
<span class="t" style="font-size:4.5px;line-height:4.5px;color:#3a3a3a;transform:translate(675.72px,508.51px) rotate(0.2deg) scaleX(0.7600);">0,00</span>
<span class="t" style="font-size:4.5px;line-height:4.5px;color:#3a3a3a;transform:translate(693.46px,508.51px) rotate(0.2deg) scaleX(0.7600);">0,00</span>
<span class="t" style="font-size:4.5px;line-height:4.5px;color:#3a3a3a;transform:translate(711.20px,508.51px) rotate(0.2deg) scaleX(0.7600);">0,00</span>
<span class="t" style="font-size:4.5px;line-height:4.5px;color:#3a3a3a;transform:translate(728.94px,508.51px) rotate(0.2deg) scaleX(0.7600);">0,00</span>
<span class="t" style="font-size:4.5px;line-height:4.5px;color:#3a3a3a;transform:translate(746.68px,508.51px) rotate(0.2deg) scaleX(0.7600);">0,00</span>
<span class="t" style="font-size:4.5px;line-height:4.5px;color:#3a3a3a;transform:translate(757.77px,508.51px) rotate(0.2deg) scaleX(0.7600);">5 168,47</span>
<span class="t" style="font-size:4.5px;line-height:4.5px;color:#3a3a3a;transform:translate(782.16px,508.51px) rotate(0.2deg) scaleX(0.7600);">0,00</span>
<span class="t" style="font-size:4.5px;line-height:4.5px;color:#3a3a3a;transform:translate(796.10px,508.51px) rotate(0.2deg) scaleX(0.7600);">462,25</span>
<span class="t" style="font-size:4.5px;line-height:4.5px;color:#3a3a3a;transform:translate(817.64px,508.51px) rotate(0.2deg) scaleX(0.7600);">0,00</span>
<span class="t" style="font-size:4.5px;line-height:4.5px;color:#3a3a3a;transform:translate(372.00px,514.95px) rotate(0.2deg) scaleX(0.7600);">Drammen</span>
<span class="t" style="font-size:4.5px;line-height:4.5px;color:#3a3a3a;transform:translate(395.60px,514.95px) rotate(0.2deg) scaleX(0.7600);">Tax result</span>
<span class="t" style="font-size:4.5px;line-height:4.5px;color:#3a3a3a;transform:translate(431.70px,514.95px) rotate(0.2deg) scaleX(0.7600);">Custom tax profile</span>
<span class="t" style="font-size:4.5px;line-height:4.5px;color:#3a3a3a;transform:translate(471.20px,514.95px) rotate(0.2deg) scaleX(0.7600);">Special tax Base Uncon</span>
<span class="t" style="font-size:4.5px;line-height:4.5px;color:#3a3a3a;transform:translate(520.40px,514.95px) rotate(0.2deg) scaleX(0.7600);">Mill</span>
<span class="t" style="font-size:4.5px;line-height:4.5px;color:#3a3a3a;transform:translate(547.00px,514.95px) rotate(0.2deg) scaleX(0.7600);">NOK</span>
<span class="t" style="font-size:4.5px;line-height:4.5px;color:#3a3a3a;transform:translate(622.09px,514.95px) rotate(0.2deg) scaleX(0.7600);">3 857,15</span>
<span class="t" style="font-size:4.5px;line-height:4.5px;color:#3a3a3a;transform:translate(640.24px,514.95px) rotate(0.2deg) scaleX(0.7600);">0,00</span>
<span class="t" style="font-size:4.5px;line-height:4.5px;color:#3a3a3a;transform:translate(657.98px,514.95px) rotate(0.2deg) scaleX(0.7600);">0,00</span>
<span class="t" style="font-size:4.5px;line-height:4.5px;color:#3a3a3a;transform:translate(675.72px,514.95px) rotate(0.2deg) scaleX(0.7600);">0,00</span>
<span class="t" style="font-size:4.5px;line-height:4.5px;color:#3a3a3a;transform:translate(693.46px,514.95px) rotate(0.2deg) scaleX(0.7600);">0,00</span>
<span class="t" style="font-size:4.5px;line-height:4.5px;color:#3a3a3a;transform:translate(711.20px,514.95px) rotate(0.2deg) scaleX(0.7600);">0,00</span>
<span class="t" style="font-size:4.5px;line-height:4.5px;color:#3a3a3a;transform:translate(728.94px,514.95px) rotate(0.2deg) scaleX(0.7600);">0,00</span>
<span class="t" style="font-size:4.5px;line-height:4.5px;color:#3a3a3a;transform:translate(746.68px,514.95px) rotate(0.2deg) scaleX(0.7600);">0,00</span>
<span class="t" style="font-size:4.5px;line-height:4.5px;color:#3a3a3a;transform:translate(757.77px,514.95px) rotate(0.2deg) scaleX(0.7600);">3 455,37</span>
<span class="t" style="font-size:4.5px;line-height:4.5px;color:#3a3a3a;transform:translate(782.16px,514.95px) rotate(0.2deg) scaleX(0.7600);">0,00</span>
<span class="t" style="font-size:4.5px;line-height:4.5px;color:#3a3a3a;transform:translate(796.10px,514.95px) rotate(0.2deg) scaleX(0.7600);">401,79</span>
<span class="t" style="font-size:4.5px;line-height:4.5px;color:#3a3a3a;transform:translate(817.64px,514.95px) rotate(0.2deg) scaleX(0.7600);">0,00</span>
<span class="t" style="font-size:4.5px;line-height:4.5px;color:#3a3a3a;transform:translate(372.00px,521.38px) rotate(0.2deg) scaleX(0.7600);">Drammen</span>
<span class="t" style="font-size:4.5px;line-height:4.5px;color:#3a3a3a;transform:translate(395.60px,521.38px) rotate(0.2deg) scaleX(0.7600);">Tax result</span>
<span class="t" style="font-size:4.5px;line-height:4.5px;color:#3a3a3a;transform:translate(431.70px,521.38px) rotate(0.2deg) scaleX(0.7600);">Custom tax profile</span>
<span class="t" style="font-size:4.5px;line-height:4.5px;color:#3a3a3a;transform:translate(471.20px,521.38px) rotate(0.2deg) scaleX(0.7600);">Corporate tax paid Uncon</span>
<span class="t" style="font-size:4.5px;line-height:4.5px;color:#3a3a3a;transform:translate(520.40px,521.38px) rotate(0.2deg) scaleX(0.7600);">Mill</span>
<span class="t" style="font-size:4.5px;line-height:4.5px;color:#3a3a3a;transform:translate(547.00px,521.38px) rotate(0.2deg) scaleX(0.7600);">NOK</span>
<span class="t" style="font-size:4.5px;line-height:4.5px;color:#3a3a3a;transform:translate(622.09px,521.38px) rotate(0.2deg) scaleX(0.7600);">1 288,36</span>
<span class="t" style="font-size:4.5px;line-height:4.5px;color:#3a3a3a;transform:translate(640.24px,521.38px) rotate(0.2deg) scaleX(0.7600);">0,00</span>
<span class="t" style="font-size:4.5px;line-height:4.5px;color:#3a3a3a;transform:translate(657.98px,521.38px) rotate(0.2deg) scaleX(0.7600);">0,00</span>
<span class="t" style="font-size:4.5px;line-height:4.5px;color:#3a3a3a;transform:translate(675.72px,521.38px) rotate(0.2deg) scaleX(0.7600);">0,00</span>
<span class="t" style="font-size:4.5px;line-height:4.5px;color:#3a3a3a;transform:translate(693.46px,521.38px) rotate(0.2deg) scaleX(0.7600);">0,00</span>
<span class="t" style="font-size:4.5px;line-height:4.5px;color:#3a3a3a;transform:translate(711.20px,521.38px) rotate(0.2deg) scaleX(0.7600);">0,00</span>
<span class="t" style="font-size:4.5px;line-height:4.5px;color:#3a3a3a;transform:translate(728.94px,521.38px) rotate(0.2deg) scaleX(0.7600);">0,00</span>
<span class="t" style="font-size:4.5px;line-height:4.5px;color:#3a3a3a;transform:translate(746.68px,521.38px) rotate(0.2deg) scaleX(0.7600);">0,00</span>
<span class="t" style="font-size:4.5px;line-height:4.5px;color:#3a3a3a;transform:translate(760.62px,521.38px) rotate(0.2deg) scaleX(0.7600);">594,67</span>
<span class="t" style="font-size:4.5px;line-height:4.5px;color:#3a3a3a;transform:translate(778.36px,521.38px) rotate(0.2deg) scaleX(0.7600);">562,12</span>
<span class="t" style="font-size:4.5px;line-height:4.5px;color:#3a3a3a;transform:translate(798.00px,521.38px) rotate(0.2deg) scaleX(0.7600);">55,46</span>
<span class="t" style="font-size:4.5px;line-height:4.5px;color:#3a3a3a;transform:translate(816.00px,521.38px) rotate(0.2deg) scaleX(0.7600);">54,11</span>
<span class="t" style="font-size:4.5px;line-height:4.5px;color:#3a3a3a;transform:translate(372.00px,527.82px) rotate(0.2deg) scaleX(0.7600);">Drammen</span>
<span class="t" style="font-size:4.5px;line-height:4.5px;color:#3a3a3a;transform:translate(395.60px,527.82px) rotate(0.2deg) scaleX(0.7600);">Tax result</span>
<span class="t" style="font-size:4.5px;line-height:4.5px;color:#3a3a3a;transform:translate(431.70px,527.82px) rotate(0.2deg) scaleX(0.7600);">Custom tax profile</span>
<span class="t" style="font-size:4.5px;line-height:4.5px;color:#3a3a3a;transform:translate(471.20px,527.82px) rotate(0.2deg) scaleX(0.7600);">Special tax paid Uncon</span>
<span class="t" style="font-size:4.5px;line-height:4.5px;color:#3a3a3a;transform:translate(520.40px,527.82px) rotate(0.2deg) scaleX(0.7600);">Mill</span>
<span class="t" style="font-size:4.5px;line-height:4.5px;color:#3a3a3a;transform:translate(547.00px,527.82px) rotate(0.2deg) scaleX(0.7600);">NOK</span>
<span class="t" style="font-size:4.5px;line-height:4.5px;color:#3a3a3a;transform:translate(622.09px,527.82px) rotate(0.2deg) scaleX(0.7600);">2 095,56</span>
<span class="t" style="font-size:4.5px;line-height:4.5px;color:#3a3a3a;transform:translate(640.24px,527.82px) rotate(0.2deg) scaleX(0.7600);">0,00</span>
<span class="t" style="font-size:4.5px;line-height:4.5px;color:#3a3a3a;transform:translate(657.98px,527.82px) rotate(0.2deg) scaleX(0.7600);">0,00</span>
<span class="t" style="font-size:4.5px;line-height:4.5px;color:#3a3a3a;transform:translate(675.72px,527.82px) rotate(0.2deg) scaleX(0.7600);">0,00</span>
<span class="t" style="font-size:4.5px;line-height:4.5px;color:#3a3a3a;transform:translate(693.46px,527.82px) rotate(0.2deg) scaleX(0.7600);">0,00</span>
<span class="t" style="font-size:4.5px;line-height:4.5px;color:#3a3a3a;transform:translate(711.20px,527.82px) rotate(0.2deg) scaleX(0.7600);">0,00</span>
<span class="t" style="font-size:4.5px;line-height:4.5px;color:#3a3a3a;transform:translate(728.94px,527.82px) rotate(0.2deg) scaleX(0.7600);">0,00</span>
<span class="t" style="font-size:4.5px;line-height:4.5px;color:#3a3a3a;transform:translate(746.68px,527.82px) rotate(0.2deg) scaleX(0.7600);">0,00</span>
<span class="t" style="font-size:4.5px;line-height:4.5px;color:#3a3a3a;transform:translate(760.62px,527.82px) rotate(0.2deg) scaleX(0.7600);">950,23</span>
<span class="t" style="font-size:4.5px;line-height:4.5px;color:#3a3a3a;transform:translate(778.36px,527.82px) rotate(0.2deg) scaleX(0.7600);">927,05</span>
<span class="t" style="font-size:4.5px;line-height:4.5px;color:#3a3a3a;transform:translate(796.35px,527.82px) rotate(0.2deg) scaleX(0.7600);">110,49</span>
<span class="t" style="font-size:4.5px;line-height:4.5px;color:#3a3a3a;transform:translate(813.84px,527.82px) rotate(0.2deg) scaleX(0.7600);">107,79</span>
<span class="t" style="font-size:4.5px;line-height:4.5px;color:#3a3a3a;transform:translate(372.00px,534.25px) rotate(0.2deg) scaleX(0.7600);">Drammen</span>
<span class="t" style="font-size:4.5px;line-height:4.5px;color:#3a3a3a;transform:translate(395.60px,534.25px) rotate(0.2deg) scaleX(0.7600);">Tax result</span>
<span class="t" style="font-size:4.5px;line-height:4.5px;color:#3a3a3a;transform:translate(431.70px,534.25px) rotate(0.2deg) scaleX(0.7600);">Custom tax profile</span>
<span class="t" style="font-size:4.5px;line-height:4.5px;color:#3a3a3a;transform:translate(471.20px,534.25px) rotate(0.2deg) scaleX(0.7600);">Corporate tax Base 100% Con</span>
<span class="t" style="font-size:4.5px;line-height:4.5px;color:#3a3a3a;transform:translate(520.40px,534.25px) rotate(0.2deg) scaleX(0.7600);">Mill</span>
<span class="t" style="font-size:4.5px;line-height:4.5px;color:#3a3a3a;transform:translate(547.00px,534.25px) rotate(0.2deg) scaleX(0.7600);">NOK</span>
<span class="t" style="font-size:4.5px;line-height:4.5px;color:#3a3a3a;transform:translate(622.09px,534.25px) rotate(0.2deg) scaleX(0.7600);">2 407,22</span>
<span class="t" style="font-size:4.5px;line-height:4.5px;color:#3a3a3a;transform:translate(640.24px,534.25px) rotate(0.2deg) scaleX(0.7600);">0,00</span>
<span class="t" style="font-size:4.5px;line-height:4.5px;color:#3a3a3a;transform:translate(653.04px,534.25px) rotate(0.2deg) scaleX(0.7600);">-389,85</span>
<span class="t" style="font-size:4.5px;line-height:4.5px;color:#3a3a3a;transform:translate(667.93px,534.25px) rotate(0.2deg) scaleX(0.7600);">-1 429,66</span>
<span class="t" style="font-size:4.5px;line-height:4.5px;color:#3a3a3a;transform:translate(685.67px,534.25px) rotate(0.2deg) scaleX(0.7600);">-2 689,73</span>
<span class="t" style="font-size:4.5px;line-height:4.5px;color:#3a3a3a;transform:translate(703.41px,534.25px) rotate(0.2deg) scaleX(0.7600);">-3 798,05</span>
<span class="t" style="font-size:4.5px;line-height:4.5px;color:#3a3a3a;transform:translate(721.15px,534.25px) rotate(0.2deg) scaleX(0.7600);">-4 191,41</span>
<span class="t" style="font-size:4.5px;line-height:4.5px;color:#3a3a3a;transform:translate(738.38px,534.25px) rotate(0.2deg) scaleX(0.7600);">11 120,33</span>
<span class="t" style="font-size:4.5px;line-height:4.5px;color:#3a3a3a;transform:translate(757.77px,534.25px) rotate(0.2deg) scaleX(0.7600);">7 652,30</span>
<span class="t" style="font-size:4.5px;line-height:4.5px;color:#3a3a3a;transform:translate(779.12px,534.25px) rotate(0.2deg) scaleX(0.7600);">-39,85</span>
<span class="t" style="font-size:4.5px;line-height:4.5px;color:#3a3a3a;transform:translate(796.10px,534.25px) rotate(0.2deg) scaleX(0.7600);">523,08</span>
<span class="t" style="font-size:4.5px;line-height:4.5px;color:#3a3a3a;transform:translate(812.70px,534.25px) rotate(0.2deg) scaleX(0.7600);">-625,73</span>
<span class="t" style="font-size:4.5px;line-height:4.5px;color:#3a3a3a;transform:translate(827.30px,534.25px) rotate(0.2deg) scaleX(0.7600);">-</span>
<span class="t" style="font-size:4.5px;line-height:4.5px;color:#3a3a3a;transform:translate(372.00px,540.69px) rotate(0.2deg) scaleX(0.7600);">Drammen</span>
<span class="t" style="font-size:4.5px;line-height:4.5px;color:#3a3a3a;transform:translate(395.60px,540.69px) rotate(0.2deg) scaleX(0.7600);">Tax result</span>
<span class="t" style="font-size:4.5px;line-height:4.5px;color:#3a3a3a;transform:translate(431.70px,540.69px) rotate(0.2deg) scaleX(0.7600);">Custom tax profile</span>
<span class="t" style="font-size:4.5px;line-height:4.5px;color:#3a3a3a;transform:translate(471.20px,540.69px) rotate(0.2deg) scaleX(0.7600);">Special tax Base 100% Con</span>
<span class="t" style="font-size:4.5px;line-height:4.5px;color:#3a3a3a;transform:translate(520.40px,540.69px) rotate(0.2deg) scaleX(0.7600);">Mill</span>
<span class="t" style="font-size:4.5px;line-height:4.5px;color:#3a3a3a;transform:translate(547.00px,540.69px) rotate(0.2deg) scaleX(0.7600);">NOK</span>
<span class="t" style="font-size:4.5px;line-height:4.5px;color:#3a3a3a;transform:translate(624.94px,540.69px) rotate(0.2deg) scaleX(0.7600);">798,19</span>
<span class="t" style="font-size:4.5px;line-height:4.5px;color:#3a3a3a;transform:translate(640.24px,540.69px) rotate(0.2deg) scaleX(0.7600);">0,00</span>
<span class="t" style="font-size:4.5px;line-height:4.5px;color:#3a3a3a;transform:translate(653.04px,540.69px) rotate(0.2deg) scaleX(0.7600);">-438,59</span>
<span class="t" style="font-size:4.5px;line-height:4.5px;color:#3a3a3a;transform:translate(667.93px,540.69px) rotate(0.2deg) scaleX(0.7600);">-1 623,05</span>
<span class="t" style="font-size:4.5px;line-height:4.5px;color:#3a3a3a;transform:translate(685.67px,540.69px) rotate(0.2deg) scaleX(0.7600);">-3 201,82</span>
<span class="t" style="font-size:4.5px;line-height:4.5px;color:#3a3a3a;transform:translate(703.41px,540.69px) rotate(0.2deg) scaleX(0.7600);">-4 053,25</span>
<span class="t" style="font-size:4.5px;line-height:4.5px;color:#3a3a3a;transform:translate(721.15px,540.69px) rotate(0.2deg) scaleX(0.7600);">-4 544,30</span>
<span class="t" style="font-size:4.5px;line-height:4.5px;color:#3a3a3a;transform:translate(738.13px,540.69px) rotate(0.2deg) scaleX(0.7600);">10 085,87</span>
<span class="t" style="font-size:4.5px;line-height:4.5px;color:#3a3a3a;transform:translate(757.77px,540.69px) rotate(0.2deg) scaleX(0.7600);">7 520,74</span>
<span class="t" style="font-size:4.5px;line-height:4.5px;color:#3a3a3a;transform:translate(779.12px,540.69px) rotate(0.2deg) scaleX(0.7600);">-99,56</span>
<span class="t" style="font-size:4.5px;line-height:4.5px;color:#3a3a3a;transform:translate(796.10px,540.69px) rotate(0.2deg) scaleX(0.7600);">503,77</span>
<span class="t" style="font-size:4.5px;line-height:4.5px;color:#3a3a3a;transform:translate(812.70px,540.69px) rotate(0.2deg) scaleX(0.7600);">-625,73</span>
<span class="t" style="font-size:4.5px;line-height:4.5px;color:#3a3a3a;transform:translate(827.30px,540.69px) rotate(0.2deg) scaleX(0.7600);">-</span>
<span class="t" style="font-size:4.5px;line-height:4.5px;color:#3a3a3a;transform:translate(372.00px,547.12px) rotate(0.2deg) scaleX(0.7600);">Drammen</span>
<span class="t" style="font-size:4.5px;line-height:4.5px;color:#3a3a3a;transform:translate(395.60px,547.12px) rotate(0.2deg) scaleX(0.7600);">Tax result</span>
<span class="t" style="font-size:4.5px;line-height:4.5px;color:#3a3a3a;transform:translate(431.70px,547.12px) rotate(0.2deg) scaleX(0.7600);">Custom tax profile</span>
<span class="t" style="font-size:4.5px;line-height:4.5px;color:#3a3a3a;transform:translate(471.20px,547.12px) rotate(0.2deg) scaleX(0.7600);">Corporate tax paid 100% Con</span>
<span class="t" style="font-size:4.5px;line-height:4.5px;color:#3a3a3a;transform:translate(520.40px,547.12px) rotate(0.2deg) scaleX(0.7600);">Mill</span>
<span class="t" style="font-size:4.5px;line-height:4.5px;color:#3a3a3a;transform:translate(547.00px,547.12px) rotate(0.2deg) scaleX(0.7600);">NOK</span>
<span class="t" style="font-size:4.5px;line-height:4.5px;color:#3a3a3a;transform:translate(624.94px,547.12px) rotate(0.2deg) scaleX(0.7600);">546,91</span>
<span class="t" style="font-size:4.5px;line-height:4.5px;color:#3a3a3a;transform:translate(640.24px,547.12px) rotate(0.2deg) scaleX(0.7600);">0,00</span>
<span class="t" style="font-size:4.5px;line-height:4.5px;color:#3a3a3a;transform:translate(654.94px,547.12px) rotate(0.2deg) scaleX(0.7600);">-44,83</span>
<span class="t" style="font-size:4.5px;line-height:4.5px;color:#3a3a3a;transform:translate(670.78px,547.12px) rotate(0.2deg) scaleX(0.7600);">-231,15</span>
<span class="t" style="font-size:4.5px;line-height:4.5px;color:#3a3a3a;transform:translate(688.52px,547.12px) rotate(0.2deg) scaleX(0.7600);">-515,16</span>
<span class="t" style="font-size:4.5px;line-height:4.5px;color:#3a3a3a;transform:translate(706.26px,547.12px) rotate(0.2deg) scaleX(0.7600);">-750,64</span>
<span class="t" style="font-size:4.5px;line-height:4.5px;color:#3a3a3a;transform:translate(724.00px,547.12px) rotate(0.2deg) scaleX(0.7600);">-898,34</span>
<span class="t" style="font-size:4.5px;line-height:4.5px;color:#3a3a3a;transform:translate(742.88px,547.12px) rotate(0.2deg) scaleX(0.7600);">808,58</span>
<span class="t" style="font-size:4.5px;line-height:4.5px;color:#3a3a3a;transform:translate(757.77px,547.12px) rotate(0.2deg) scaleX(0.7600);">2 127,66</span>
<span class="t" style="font-size:4.5px;line-height:4.5px;color:#3a3a3a;transform:translate(778.36px,547.12px) rotate(0.2deg) scaleX(0.7600);">853,97</span>
<span class="t" style="font-size:4.5px;line-height:4.5px;color:#3a3a3a;transform:translate(798.00px,547.12px) rotate(0.2deg) scaleX(0.7600);">55,68</span>
<span class="t" style="font-size:4.5px;line-height:4.5px;color:#3a3a3a;transform:translate(814.60px,547.12px) rotate(0.2deg) scaleX(0.7600);">-47,77</span>
<span class="t" style="font-size:4.5px;line-height:4.5px;color:#3a3a3a;transform:translate(827.30px,547.12px) rotate(0.2deg) scaleX(0.7600);">-</span>
<span class="t" style="font-size:4.5px;line-height:4.5px;color:#3a3a3a;transform:translate(372.00px,553.56px) rotate(0.2deg) scaleX(0.7600);">Drammen</span>
<span class="t" style="font-size:4.5px;line-height:4.5px;color:#3a3a3a;transform:translate(395.60px,553.56px) rotate(0.2deg) scaleX(0.7600);">Tax result</span>
<span class="t" style="font-size:4.5px;line-height:4.5px;color:#3a3a3a;transform:translate(431.70px,553.56px) rotate(0.2deg) scaleX(0.7600);">Custom tax profile</span>
<span class="t" style="font-size:4.5px;line-height:4.5px;color:#3a3a3a;transform:translate(471.20px,553.56px) rotate(0.2deg) scaleX(0.7600);">Special tax paid 100% Con</span>
<span class="t" style="font-size:4.5px;line-height:4.5px;color:#3a3a3a;transform:translate(520.40px,553.56px) rotate(0.2deg) scaleX(0.7600);">Mill</span>
<span class="t" style="font-size:4.5px;line-height:4.5px;color:#3a3a3a;transform:translate(547.00px,553.56px) rotate(0.2deg) scaleX(0.7600);">NOK</span>
<span class="t" style="font-size:4.5px;line-height:4.5px;color:#3a3a3a;transform:translate(624.94px,553.56px) rotate(0.2deg) scaleX(0.7600);">384,75</span>
<span class="t" style="font-size:4.5px;line-height:4.5px;color:#3a3a3a;transform:translate(640.24px,553.56px) rotate(0.2deg) scaleX(0.7600);">0,00</span>
<span class="t" style="font-size:4.5px;line-height:4.5px;color:#3a3a3a;transform:translate(653.04px,553.56px) rotate(0.2deg) scaleX(0.7600);">-120,61</span>
<span class="t" style="font-size:4.5px;line-height:4.5px;color:#3a3a3a;transform:translate(670.78px,553.56px) rotate(0.2deg) scaleX(0.7600);">-619,23</span>
<span class="t" style="font-size:4.5px;line-height:4.5px;color:#3a3a3a;transform:translate(685.67px,553.56px) rotate(0.2deg) scaleX(0.7600);">-1 399,85</span>
<span class="t" style="font-size:4.5px;line-height:4.5px;color:#3a3a3a;transform:translate(703.41px,553.56px) rotate(0.2deg) scaleX(0.7600);">-1 873,70</span>
<span class="t" style="font-size:4.5px;line-height:4.5px;color:#3a3a3a;transform:translate(721.15px,553.56px) rotate(0.2deg) scaleX(0.7600);">-2 337,14</span>
<span class="t" style="font-size:4.5px;line-height:4.5px;color:#3a3a3a;transform:translate(740.03px,553.56px) rotate(0.2deg) scaleX(0.7600);">1 774,19</span>
<span class="t" style="font-size:4.5px;line-height:4.5px;color:#3a3a3a;transform:translate(757.77px,553.56px) rotate(0.2deg) scaleX(0.7600);">4 988,59</span>
<span class="t" style="font-size:4.5px;line-height:4.5px;color:#3a3a3a;transform:translate(775.51px,553.56px) rotate(0.2deg) scaleX(0.7600);">1 990,38</span>
<span class="t" style="font-size:4.5px;line-height:4.5px;color:#3a3a3a;transform:translate(796.61px,553.56px) rotate(0.2deg) scaleX(0.7600);">111,83</span>
<span class="t" style="font-size:4.5px;line-height:4.5px;color:#3a3a3a;transform:translate(812.95px,553.56px) rotate(0.2deg) scaleX(0.7600);">-119,42</span>
<span class="t" style="font-size:4.5px;line-height:4.5px;color:#3a3a3a;transform:translate(827.30px,553.56px) rotate(0.2deg) scaleX(0.7600);">-</span>
<span class="t" style="font-size:4.5px;line-height:4.5px;color:#3a3a3a;transform:translate(372.00px,559.99px) rotate(0.2deg) scaleX(0.7600);">Drammen</span>
<span class="t" style="font-size:4.5px;line-height:4.5px;color:#3a3a3a;transform:translate(395.60px,559.99px) rotate(0.2deg) scaleX(0.7600);">NPV</span>
<span class="t" style="font-size:4.5px;line-height:4.5px;color:#3a3a3a;transform:translate(431.70px,559.99px) rotate(0.2deg) scaleX(0.7600);">Before tax</span>
<span class="t" style="font-size:4.5px;line-height:4.5px;color:#3a3a3a;transform:translate(471.20px,559.99px) rotate(0.2deg) scaleX(0.7600);">Pretax</span>
<span class="t" style="font-size:4.5px;line-height:4.5px;color:#3a3a3a;transform:translate(520.40px,559.99px) rotate(0.2deg) scaleX(0.7600);">Mill</span>
<span class="t" style="font-size:4.5px;line-height:4.5px;color:#3a3a3a;transform:translate(547.00px,559.99px) rotate(0.2deg) scaleX(0.7600);">NOK</span>
<span class="t" style="font-size:4.5px;line-height:4.5px;color:#3a3a3a;transform:translate(567.60px,559.99px) rotate(0.2deg) scaleX(0.7600);">8%</span>
<span class="t" style="font-size:4.5px;line-height:4.5px;color:#3a3a3a;transform:translate(601.05px,559.99px) rotate(0.2deg) scaleX(0.7600);">-4 751,71</span>
<span class="t" style="font-size:4.5px;line-height:4.5px;color:#3a3a3a;transform:translate(372.00px,566.43px) rotate(0.2deg) scaleX(0.7600);">Drammen</span>
<span class="t" style="font-size:4.5px;line-height:4.5px;color:#3a3a3a;transform:translate(395.60px,566.43px) rotate(0.2deg) scaleX(0.7600);">NPV</span>
<span class="t" style="font-size:4.5px;line-height:4.5px;color:#3a3a3a;transform:translate(431.70px,566.43px) rotate(0.2deg) scaleX(0.7600);">Before tax</span>
<span class="t" style="font-size:4.5px;line-height:4.5px;color:#3a3a3a;transform:translate(471.20px,566.43px) rotate(0.2deg) scaleX(0.7600);">Pretax</span>
<span class="t" style="font-size:4.5px;line-height:4.5px;color:#3a3a3a;transform:translate(520.40px,566.43px) rotate(0.2deg) scaleX(0.7600);">Mill</span>
<span class="t" style="font-size:4.5px;line-height:4.5px;color:#3a3a3a;transform:translate(547.00px,566.43px) rotate(0.2deg) scaleX(0.7600);">NOK</span>
<span class="t" style="font-size:4.5px;line-height:4.5px;color:#3a3a3a;transform:translate(567.60px,566.43px) rotate(0.2deg) scaleX(0.7600);">7%</span>
<span class="t" style="font-size:4.5px;line-height:4.5px;color:#3a3a3a;transform:translate(601.05px,566.43px) rotate(0.2deg) scaleX(0.7600);">-4 231,58</span>
<span class="t" style="font-size:4.5px;line-height:4.5px;color:#3a3a3a;transform:translate(372.00px,572.86px) rotate(0.2deg) scaleX(0.7600);">Drammen</span>
<span class="t" style="font-size:4.5px;line-height:4.5px;color:#3a3a3a;transform:translate(395.60px,572.86px) rotate(0.2deg) scaleX(0.7600);">NPV</span>
<span class="t" style="font-size:4.5px;line-height:4.5px;color:#3a3a3a;transform:translate(431.70px,572.86px) rotate(0.2deg) scaleX(0.7600);">Before tax</span>
<span class="t" style="font-size:4.5px;line-height:4.5px;color:#3a3a3a;transform:translate(471.20px,572.86px) rotate(0.2deg) scaleX(0.7600);">Pretax</span>
<span class="t" style="font-size:4.5px;line-height:4.5px;color:#3a3a3a;transform:translate(520.40px,572.86px) rotate(0.2deg) scaleX(0.7600);">Mill</span>
<span class="t" style="font-size:4.5px;line-height:4.5px;color:#3a3a3a;transform:translate(547.00px,572.86px) rotate(0.2deg) scaleX(0.7600);">NOK</span>
<span class="t" style="font-size:4.5px;line-height:4.5px;color:#3a3a3a;transform:translate(567.60px,572.86px) rotate(0.2deg) scaleX(0.7600);">0%</span>
<span class="t" style="font-size:4.5px;line-height:4.5px;color:#3a3a3a;transform:translate(605.04px,572.86px) rotate(0.2deg) scaleX(0.7600);">749,62</span>
<span class="t" style="font-size:4.5px;line-height:4.5px;color:#3a3a3a;transform:translate(372.00px,579.30px) rotate(0.2deg) scaleX(0.7600);">Drammen</span>
<span class="t" style="font-size:4.5px;line-height:4.5px;color:#3a3a3a;transform:translate(395.60px,579.30px) rotate(0.2deg) scaleX(0.7600);">NPV</span>
<span class="t" style="font-size:4.5px;line-height:4.5px;color:#3a3a3a;transform:translate(431.70px,579.30px) rotate(0.2deg) scaleX(0.7600);">Before tax</span>
<span class="t" style="font-size:4.5px;line-height:4.5px;color:#3a3a3a;transform:translate(471.20px,579.30px) rotate(0.2deg) scaleX(0.7600);">Pretax</span>
<span class="t" style="font-size:4.5px;line-height:4.5px;color:#3a3a3a;transform:translate(520.40px,579.30px) rotate(0.2deg) scaleX(0.7600);">Mill</span>
<span class="t" style="font-size:4.5px;line-height:4.5px;color:#3a3a3a;transform:translate(547.00px,579.30px) rotate(0.2deg) scaleX(0.7600);">NOK</span>
<span class="t" style="font-size:4.5px;line-height:4.5px;color:#3a3a3a;transform:translate(567.60px,579.30px) rotate(0.2deg) scaleX(0.7600);">profile</span>
<span class="t" style="font-size:4.5px;line-height:4.5px;color:#3a3a3a;transform:translate(605.04px,579.30px) rotate(0.2deg) scaleX(0.7600);">749,62</span>
<span class="t" style="font-size:4.5px;line-height:4.5px;color:#3a3a3a;transform:translate(372.00px,585.73px) rotate(0.2deg) scaleX(0.7600);">Drammen</span>
<span class="t" style="font-size:4.5px;line-height:4.5px;color:#3a3a3a;transform:translate(395.60px,585.73px) rotate(0.2deg) scaleX(0.7600);">NPV</span>
<span class="t" style="font-size:4.5px;line-height:4.5px;color:#3a3a3a;transform:translate(431.70px,585.73px) rotate(0.2deg) scaleX(0.7600);">After tax</span>
<span class="t" style="font-size:4.5px;line-height:4.5px;color:#3a3a3a;transform:translate(471.20px,585.73px) rotate(0.2deg) scaleX(0.7600);">Unconsolidated</span>
<span class="t" style="font-size:4.5px;line-height:4.5px;color:#3a3a3a;transform:translate(520.40px,585.73px) rotate(0.2deg) scaleX(0.7600);">Mill</span>
<span class="t" style="font-size:4.5px;line-height:4.5px;color:#3a3a3a;transform:translate(547.00px,585.73px) rotate(0.2deg) scaleX(0.7600);">NOK</span>
<span class="t" style="font-size:4.5px;line-height:4.5px;color:#3a3a3a;transform:translate(567.60px,585.73px) rotate(0.2deg) scaleX(0.7600);">8%</span>
<span class="t" style="font-size:4.5px;line-height:4.5px;color:#3a3a3a;transform:translate(601.05px,585.73px) rotate(0.2deg) scaleX(0.7600);">-6 777,76</span>
<span class="t" style="font-size:4.5px;line-height:4.5px;color:#3a3a3a;transform:translate(372.00px,592.16px) rotate(0.2deg) scaleX(0.7600);">Drammen</span>
<span class="t" style="font-size:4.5px;line-height:4.5px;color:#3a3a3a;transform:translate(395.60px,592.16px) rotate(0.2deg) scaleX(0.7600);">NPV</span>
<span class="t" style="font-size:4.5px;line-height:4.5px;color:#3a3a3a;transform:translate(431.70px,592.16px) rotate(0.2deg) scaleX(0.7600);">After tax</span>
<span class="t" style="font-size:4.5px;line-height:4.5px;color:#3a3a3a;transform:translate(471.20px,592.16px) rotate(0.2deg) scaleX(0.7600);">Unconsolidated</span>
<span class="t" style="font-size:4.5px;line-height:4.5px;color:#3a3a3a;transform:translate(520.40px,592.16px) rotate(0.2deg) scaleX(0.7600);">Mill</span>
<span class="t" style="font-size:4.5px;line-height:4.5px;color:#3a3a3a;transform:translate(547.00px,592.16px) rotate(0.2deg) scaleX(0.7600);">NOK</span>
<span class="t" style="font-size:4.5px;line-height:4.5px;color:#3a3a3a;transform:translate(567.60px,592.16px) rotate(0.2deg) scaleX(0.7600);">7%</span>
<span class="t" style="font-size:4.5px;line-height:4.5px;color:#3a3a3a;transform:translate(601.05px,592.16px) rotate(0.2deg) scaleX(0.7600);">-6 384,83</span></div>
<div class="a" id="win1" style="left:15.2px;top:15.0px;width:767.8px;height:459.8px;background:#eeeeee;box-shadow:0 1px 13px rgba(0,0,0,0.085),0 0 2px rgba(0,0,0,0.08);"></div>
<div class="a " style="left:15.20px;top:15.00px;width:767.80px;height:8.90px;background:#edf2fa;"></div>
<svg width="844" height="603" viewBox="0 0 844 603"><g stroke="#3d7fda" stroke-width="0.8" fill="none" stroke-linecap="round"><path d="M17.0 22.2L20.6 16.6"/><path d="M20.3 17.4L21.2 21.8"/><path d="M18.4 20.4L21.0 20.9"/></g><circle cx="21.1" cy="21.6" r="0.7" fill="#3d7fda"/><g stroke="#3a3a3a" stroke-width="0.75" fill="none"><line x1="735.0" y1="19.2" x2="738.4" y2="19.2"/><rect x="753.0" y="18.2" width="2.8" height="2.8"/><path d="M754.0 18.2v-0.9h2.8v2.8h-1"/><path d="M771.2 17.5l3.3 3.3M774.5 17.5l-3.3 3.3"/></g><path d="M779.3 27.2h2.6l-1.3 1.6z" fill="#333"/></svg>
<div class="a " style="left:16.70px;top:24.40px;width:101.90px;height:449.20px;background:#ffffff;border:0.6px solid #e0e0e0;"></div>
<svg width="844" height="603" viewBox="0 0 844 603"><g fill="#3b86d8"><rect x="111.2" y="28.6" width="1.8" height="2.6" rx="0.6"/><rect x="111.8" y="31.0" width="0.6" height="1.3"/></g></svg>
<svg width="844" height="603" viewBox="0 0 844 603"><rect x="21.9" y="38.5" width="6.0" height="5.5" rx="0.5" fill="#f2a93a"/><path d="M24.1 41.0h3.2M24.1 42.4h3.2" stroke="#f9d48c" stroke-width="0.6"/><path d="M20.5 39.9h4.2M22.6 37.9v4.0" stroke="#168a2b" stroke-width="1.3"/><rect x="34.1" y="38.5" width="6.0" height="5.5" rx="0.5" fill="#dd2a2e"/><path d="M36.300000000000004 41.0h3.2M36.300000000000004 42.4h3.2" stroke="#f5b5b5" stroke-width="0.6"/><path d="M32.7 39.9h4.2M34.800000000000004 37.9v4.0" stroke="#168a2b" stroke-width="1.3"/><rect x="46.1" y="38.5" width="6.0" height="5.5" rx="0.5" fill="#3a8ad6"/><path d="M48.300000000000004 41.0h3.2M48.300000000000004 42.4h3.2" stroke="#a8cdf0" stroke-width="0.6"/><path d="M44.7 39.9h4.2M46.800000000000004 37.9v4.0" stroke="#168a2b" stroke-width="1.3"/><rect x="55.0" y="36.6" width="0.6" height="9.2" fill="#e2e2e2"/><path d="M59.6 40.2h2.2l0.7 0.8h3.3v3.0h-6.2z" fill="#fbf3e2" stroke="#d9a85a" stroke-width="0.6"/><circle cx="61.2" cy="39.0" r="1.1" fill="#2f6fd0"/><path d="M59.4 39.6l1.8 -0.8" stroke="#2f6fd0" stroke-width="0.6"/><rect x="72.4" y="38.3" width="5.0" height="5.0" rx="0.9" fill="#fff" stroke="#555" stroke-width="0.65"/><rect x="71.3" y="39.3" width="5.0" height="5.0" rx="0.9" fill="#fff" stroke="#555" stroke-width="0.65"/></svg>
<div class="a " style="left:18.30px;top:47.20px;width:98.00px;height:424.40px;background:#ffffff;border:0.7px solid #e6e8ea;"></div>
<div class="a " style="left:57.50px;top:124.85px;width:18.90px;height:8.20px;background:#aadaf7;border:0.6px solid #93cef3;"></div>
<svg width="844" height="603" viewBox="0 0 844 603"><path d="M22.50 50.85l1.6 1.6l-1.6 1.6" fill="none" stroke="#a6a6a6" stroke-width="0.6"/></svg>
<svg width="844" height="603" viewBox="0 0 844 603"><path d="M22.50 59.35l1.6 1.6l-1.6 1.6" fill="none" stroke="#a6a6a6" stroke-width="0.6"/></svg>
<svg width="844" height="603" viewBox="0 0 844 603"><path d="M24.70 76.45v3.0h-3.0z" fill="#1e1e1e"/></svg>
<svg width="844" height="603" viewBox="0 0 844 603"><path d="M32.30 84.95v3.0h-3.0z" fill="#1e1e1e"/></svg>
<svg width="844" height="603" viewBox="0 0 844 603"><path d="M39.90 93.45v3.0h-3.0z" fill="#1e1e1e"/></svg>
<svg width="844" height="603" viewBox="0 0 844 603"><path d="M47.50 101.95v3.0h-3.0z" fill="#1e1e1e"/></svg>
<svg width="844" height="603" viewBox="0 0 844 603"><path d="M45.30 169.85l1.6 1.6l-1.6 1.6" fill="none" stroke="#a6a6a6" stroke-width="0.6"/></svg>
<svg width="844" height="603" viewBox="0 0 844 603"><path d="M45.30 178.35l1.6 1.6l-1.6 1.6" fill="none" stroke="#a6a6a6" stroke-width="0.6"/></svg>
<svg width="844" height="603" viewBox="0 0 844 603"><path d="M37.70 186.85l1.6 1.6l-1.6 1.6" fill="none" stroke="#a6a6a6" stroke-width="0.6"/></svg>
<svg width="844" height="603" viewBox="0 0 844 603"><path d="M37.70 195.35l1.6 1.6l-1.6 1.6" fill="none" stroke="#a6a6a6" stroke-width="0.6"/></svg>
<svg width="844" height="603" viewBox="0 0 844 603"><circle cx="30.7" cy="52.45" r="2.3" fill="#fff" stroke="#555" stroke-width="0.65"/><path d="M30.7 51.25v1.4h1" stroke="#666" stroke-width="0.5" fill="none"/><circle cx="30.7" cy="60.95" r="2.3" fill="#666" stroke="#555" stroke-width="0.65"/><path d="M29.2 60.45h3M29.2 61.650000000000006h3" stroke="#fff" stroke-width="0.5" fill="none"/><rect x="28.2" y="67.15" width="5" height="4.6" fill="#8a8a8a" stroke="#555" stroke-width="0.5"/><path d="M28.2 68.65h5M28.2 70.15h5M29.9 67.15v4.6" stroke="#ddd" stroke-width="0.4"/><rect x="29.099999999999998" y="75.05" width="4.4" height="4.6" rx="0.8" fill="#fff" stroke="#555" stroke-width="0.6"/><rect x="28.099999999999998" y="76.05" width="4.4" height="4.6" rx="0.8" fill="#fff" stroke="#555" stroke-width="0.6"/><rect x="35.699999999999996" y="83.65" width="5.2" height="5.6" fill="#3f8fdc"/><path d="M35.699999999999996 85.45h5.2M35.699999999999996 87.35000000000001h5.2M38.3 83.65v5.6" stroke="#8fc0ee" stroke-width="0.4"/><rect x="43.4" y="92.35000000000001" width="5" height="5.2" rx="0.5" fill="#fff" stroke="#3c3c3c" stroke-width="0.7"/><path d="M44.0 96.85000000000001l1.2 -1.8l0.9 1l0.8 -1.6l1 2.4z" fill="#444"/><circle cx="45.0" cy="93.75" r="0.6" fill="#555"/><rect x="51.0" y="100.85000000000001" width="5" height="5.2" rx="0.5" fill="#fff" stroke="#3c3c3c" stroke-width="0.7"/><path d="M51.6 105.35000000000001l1.2 -1.8l0.9 1l0.8 -1.6l1 2.4z" fill="#444"/><circle cx="52.6" cy="102.25" r="0.6" fill="#555"/><path d="M59.1 109.25h2.8l1.4 1.4v4.0h-4.2z" fill="#fff" stroke="#4a4a4a" stroke-width="0.65"/><path d="M60.0 111.45h2.4M60.0 112.45h2.4M60.0 113.45h2.4" stroke="#555" stroke-width="0.5"/><path d="M59.1 117.75h2.8l1.4 1.4v4.0h-4.2z" fill="#fff" stroke="#4a4a4a" stroke-width="0.65"/><path d="M60.0 119.95h2.4M60.0 120.95h2.4M60.0 121.95h2.4" stroke="#555" stroke-width="0.5"/><rect x="58.6" y="126.35" width="5" height="5.2" rx="0.5" fill="#fff" stroke="#444" stroke-width="0.7"/><path d="M59.300000000000004 130.35l1.3 -2l1 1l1.5 -2.2" fill="none" stroke="#555" stroke-width="0.6"/><path d="M59.1 134.75h2.8l1.4 1.4v4.0h-4.2z" fill="#fff" stroke="#4a4a4a" stroke-width="0.65"/><path d="M60.0 136.95h2.4M60.0 137.95h2.4M60.0 138.95h2.4" stroke="#555" stroke-width="0.5"/><path d="M59.1 143.25h2.8l1.4 1.4v4.0h-4.2z" fill="#fff" stroke="#4a4a4a" stroke-width="0.65"/><path d="M60.0 145.45h2.4M60.0 146.45h2.4M60.0 147.45h2.4" stroke="#555" stroke-width="0.5"/><path d="M59.1 151.75h2.8l1.4 1.4v4.0h-4.2z" fill="#fff" stroke="#4a4a4a" stroke-width="0.65"/><path d="M60.0 153.95h2.4M60.0 154.95h2.4M60.0 155.95h2.4" stroke="#555" stroke-width="0.5"/><path d="M59.6 160.75h2l0.5 0.6h2.4v3.6h-4.9z" fill="#dfa245"/><path d="M61.2 161.35v3.6M62.9 161.35v3.6" stroke="#f3d59a" stroke-width="0.5"/><rect x="51.0" y="168.85" width="5" height="5.2" rx="0.5" fill="#fff" stroke="#3c3c3c" stroke-width="0.7"/><path d="M51.6 173.35l1.2 -1.8l0.9 1l0.8 -1.6l1 2.4z" fill="#444"/><circle cx="52.6" cy="170.25" r="0.6" fill="#555"/><rect x="51.0" y="177.35" width="5" height="5.2" rx="0.5" fill="#fff" stroke="#3c3c3c" stroke-width="0.7"/><path d="M51.6 181.85l1.2 -1.8l0.9 1l0.8 -1.6l1 2.4z" fill="#444"/><circle cx="52.6" cy="178.75" r="0.6" fill="#555"/><rect x="43.4" y="185.85" width="5" height="5.2" rx="0.5" fill="#fff" stroke="#555" stroke-width="0.7"/><circle cx="45.9" cy="188.45" r="1.2" fill="none" stroke="#555" stroke-width="0.6"/><path d="M43.9 186.45l4 4M47.9 186.45l-4 4" stroke="#777" stroke-width="0.4"/><path d="M43.5 194.75h2l0.5 0.6h2.4v3.6h-4.9z" fill="#dfa245"/><path d="M45.1 195.35v3.6M46.8 195.35v3.6" stroke="#f3d59a" stroke-width="0.5"/></svg>
<div class="a " style="left:121.50px;top:39.40px;width:661.50px;height:435.00px;background:#ffffff;border:0.7px solid #dcdcdc;border-right:1px solid #dedede;border-bottom:none;"></div>
<div class="a " style="left:121.50px;top:39.00px;width:661.50px;height:0.70px;background:#dddddd;"></div>
<div class="a " style="left:121.50px;top:24.40px;width:52.30px;height:15.60px;background:#ffffff;border:0.7px solid #d6d6d6;border-bottom:none;border-radius:1px 1px 0 0;"></div>
<div class="a " style="left:175.10px;top:24.60px;width:51.50px;height:14.60px;background:#dedede;border:0.7px solid #cfcfcf;border-bottom:none;border-radius:1px 1px 0 0;"></div>
<div class="a " style="left:228.00px;top:24.60px;width:51.90px;height:14.60px;background:#dedede;border:0.7px solid #cfcfcf;border-bottom:none;border-radius:1px 1px 0 0;"></div>
<div class="a " style="left:281.70px;top:24.60px;width:19.10px;height:14.60px;background:#dedede;border:0.7px solid #cfcfcf;border-bottom:none;border-radius:1px 1px 0 0;"></div>
<div class="a " style="left:125.70px;top:46.30px;width:34.00px;height:20.60px;border:0.7px solid #ebeff4;border-radius:1.5px;"></div>
<div class="a " style="left:127.90px;top:44.00px;width:11.50px;height:4.50px;background:#fff;"></div>
<svg width="844" height="603" viewBox="0 0 844 603"><circle cx="129.9" cy="52.6" r="2.0" fill="#fff" stroke="#5a8fd6" stroke-width="0.6"/><circle cx="129.9" cy="52.6" r="1.2" fill="#111"/><circle cx="129.9" cy="59.0" r="2.0" fill="#fff" stroke="#a8a8a8" stroke-width="0.55"/></svg>
<div class="a " style="left:162.80px;top:46.30px;width:201.80px;height:20.60px;border:0.7px solid #ebeff4;border-radius:1.5px;"></div>
<div class="a " style="left:165.00px;top:44.00px;width:11.00px;height:4.50px;background:#fff;"></div>
<div class="a " style="left:186.10px;top:53.00px;width:38.40px;height:8.80px;background:#fff;border:0.7px solid #c9c9c9;border-radius:1px;"></div>
<div class="a " style="left:227.60px;top:49.00px;width:0.60px;height:15.60px;background:#e1e1e1;"></div>
<div class="a " style="left:230.40px;top:52.60px;width:54.20px;height:9.80px;background:#ececec;border-radius:0.8px;"></div>
<svg width="844" height="603" viewBox="0 0 844 603"><rect x="233.5" y="55.3" width="4.0" height="4.2" rx="0.5" fill="none" stroke="#666" stroke-width="0.5"/></svg>
<svg width="844" height="603" viewBox="0 0 844 603"><path d="M234.3 57.5l1 1l1.6 -2.2" fill="none" stroke="#444" stroke-width="0.6"/></svg>
<div class="a " style="left:287.40px;top:49.00px;width:0.60px;height:15.60px;background:#e1e1e1;"></div>
<div class="a " style="left:314.40px;top:53.00px;width:48.20px;height:8.80px;background:#fff;border:0.7px solid #c9c9c9;border-radius:1px;"></div>
<svg width="844" height="603" viewBox="0 0 844 603"><path d="M220.5 56.8h2l-1 1.3z" fill="#333"/><path d="M358.6 56.8h2l-1 1.3z" fill="#333"/></svg>
<div class="a " style="left:367.70px;top:46.30px;width:90.00px;height:20.80px;border:0.7px solid #ebeff4;border-radius:1.5px;"></div>
<div class="a " style="left:369.90px;top:44.00px;width:47.00px;height:4.50px;background:#fff;"></div>
<svg width="844" height="603" viewBox="0 0 844 603"><rect x="369.9" y="55.0" width="4.7" height="4.8" rx="0.4" fill="#fff" stroke="#777" stroke-width="0.5"/></svg>
<div class="a " style="left:396.10px;top:56.60px;width:19.60px;height:8.20px;background:#fff;border:0.7px solid #d4d4d4;"></div>
<div class="a " style="left:416.60px;top:56.60px;width:19.00px;height:8.20px;background:#fff;border:0.7px solid #d4d4d4;"></div>
<div class="a " style="left:436.70px;top:56.60px;width:19.00px;height:8.20px;background:#f0f0f0;border:0.7px solid #d5d5d5;"></div>
<div class="a " style="left:125.30px;top:69.40px;width:8.30px;height:8.30px;background:#fff;border:0.7px solid #d9d9d9;border-radius:0.8px;"></div>
<svg width="844" height="603" viewBox="0 0 844 603"><path d="M127.9 72.7h3.2l-1.6 2z" fill="#222"/></svg>
<svg width="844" height="603" viewBox="0 0 844 603"><g stroke="#ececec" stroke-width="0.8"><line x1="159.2" y1="141.4" x2="684.8" y2="141.4"/><line x1="159.2" y1="200.5" x2="684.8" y2="200.5"/><line x1="159.2" y1="259.5" x2="684.8" y2="259.5"/><line x1="159.2" y1="318.4" x2="684.8" y2="318.4"/><line x1="159.2" y1="377.4" x2="684.8" y2="377.4"/><line x1="159.2" y1="436.4" x2="684.8" y2="436.4"/></g><polyline points="166.4,286.4 183.4,291.4 200.4,292.2 217.4,292.0 234.4,288.4 251.4,249.9 268.4,254.0 285.4,201.6 302.4,196.0 319.4,171.5 336.4,145.4 353.4,150.7 370.4,151.6 387.4,138.2 404.4,169.8 421.4,190.0 438.4,201.0 455.4,244.8 472.4,260.3 489.4,266.6 506.4,273.1 523.4,286.0 540.4,284.8 557.4,287.3 574.4,288.8 591.4,294.4 608.4,296.9 625.4,304.0 642.4,311.0 659.4,318.0 676.4,318.0" fill="none" stroke="#2e86c1" stroke-width="1.25" stroke-linejoin="round"/><polyline points="166.4,305.5 183.4,320.0 200.4,350.0 217.4,369.0 234.4,366.0 251.4,284.8 268.4,309.7 285.4,287.2 302.4,290.4 319.4,236.7 336.4,183.1 353.4,187.7 370.4,186.4 387.4,172.3 404.4,203.4 421.4,223.2 438.4,234.5 455.4,279.3 472.4,293.4 489.4,283.7 506.4,290.3 523.4,303.4 540.4,302.6 557.4,304.4 574.4,305.8 591.4,311.0 608.4,313.5 625.4,325.0 642.4,330.0 659.4,335.6 676.4,318.0" fill="none" stroke="#8e44c8" stroke-width="1.25" stroke-linejoin="round"/><polyline points="166.4,311.3 183.4,319.0 200.4,345.0 217.4,360.5 234.4,362.5 251.4,295.0 268.4,314.0 285.4,300.0 302.4,303.0 319.4,257.0 336.4,211.1 353.4,221.5 370.4,232.8 387.4,228.0 404.4,251.0 421.4,263.0 438.4,271.8 455.4,299.4" fill="none" stroke="#ccd2d4" stroke-width="1.0" stroke-linejoin="round"/><polyline points="166.4,311.5 183.4,319.0 200.4,346.0 217.4,362.0 234.4,364.0 251.4,297.8 268.4,317.4 285.4,303.2 302.4,304.4 319.4,262.5 336.4,220.7 353.4,232.3 370.4,236.5 387.4,228.7 404.4,251.0 421.4,263.0 438.4,271.8 455.4,299.4" fill="none" stroke="#f4d03f" stroke-width="1.0" stroke-linejoin="round"/><polyline points="166.4,311.5 183.4,319.0 200.4,345.5 217.4,361.0 234.4,363.0 251.4,295.8 268.4,315.6 285.4,301.4 302.4,305.3 319.4,267.0 336.4,228.7 353.4,237.0 370.4,237.0 387.4,228.7 404.4,251.0 421.4,263.0 438.4,271.8 455.4,299.4" fill="none" stroke="#28a745" stroke-width="1.1" stroke-linejoin="round"/><polyline points="608.4,316.3 625.4,321.0 642.4,324.0 659.4,327.0 676.4,318.0" fill="none" stroke="#ccd2d4" stroke-width="1.0" stroke-linejoin="round"/><polyline points="608.4,316.3 625.4,321.0 642.4,324.0 659.4,327.0 676.4,318.0" fill="none" stroke="#f4d03f" stroke-width="1.0" stroke-linejoin="round"/><polyline points="608.4,316.3 625.4,321.0 642.4,324.0 659.4,327.0 676.4,318.0" fill="none" stroke="#28a745" stroke-width="1.1" stroke-linejoin="round"/><polyline points="166.4,311.2 183.4,319.0 200.4,345.0 217.4,360.0 234.4,362.0 251.4,295.5 268.4,312.7 285.4,300.5 302.4,303.2 319.4,260.5 336.4,217.9 353.4,226.0 370.4,228.2 387.4,222.4 404.4,248.0 421.4,262.2 438.4,271.6 455.4,299.4 472.4,305.2 489.4,298.1 506.4,303.4 523.4,311.0 540.4,308.9 557.4,310.9 574.4,311.4 591.4,314.7 608.4,316.3 625.4,322.0 642.4,325.0 659.4,330.0 676.4,318.0" fill="none" stroke="#8d6e63" stroke-width="1.25" stroke-linejoin="round"/><rect x="159.2" y="318.5" width="15" height="0.7" fill="#e23b30"/><rect x="159.2" y="319.2" width="15" height="7.1" fill="#f9c21e"/><rect x="159.2" y="326.3" width="15" height="9.4" fill="#87cbe8"/><rect x="159.2" y="335.7" width="15" height="2.2" fill="#b83030"/><rect x="176.2" y="318.5" width="15" height="0.4" fill="#e23b30"/><rect x="176.2" y="318.9" width="15" height="6.9" fill="#f9c21e"/><rect x="176.2" y="325.8" width="15" height="16.5" fill="#87cbe8"/><rect x="176.2" y="342.3" width="15" height="2.2" fill="#b83030"/><rect x="193.2" y="318.5" width="15" height="0.4" fill="#e23b30"/><rect x="193.2" y="318.9" width="15" height="6.9" fill="#f9c21e"/><rect x="193.2" y="325.8" width="15" height="44.7" fill="#87cbe8"/><rect x="193.2" y="370.5" width="15" height="7.0" fill="#b83030"/><rect x="210.2" y="318.5" width="15" height="0.4" fill="#e23b30"/><rect x="210.2" y="318.9" width="15" height="7.7" fill="#f9c21e"/><rect x="210.2" y="326.6" width="15" height="41.8" fill="#87cbe8"/><rect x="210.2" y="368.4" width="15" height="27.0" fill="#b83030"/><rect x="227.2" y="318.5" width="15" height="0.4" fill="#e23b30"/><rect x="227.2" y="318.9" width="15" height="7.2" fill="#f9c21e"/><rect x="227.2" y="326.1" width="15" height="42.8" fill="#87cbe8"/><rect x="227.2" y="368.9" width="15" height="27.0" fill="#b83030"/><rect x="244.2" y="318.5" width="15" height="4.3" fill="#e23b30"/><rect x="244.2" y="322.8" width="15" height="9.2" fill="#f9c21e"/><rect x="244.2" y="332.0" width="15" height="16.1" fill="#87cbe8"/><rect x="244.2" y="348.1" width="15" height="10.5" fill="#b83030"/><rect x="261.2" y="318.5" width="15" height="3.1" fill="#e23b30"/><rect x="261.2" y="321.6" width="15" height="25.7" fill="#f9c21e"/><rect x="261.2" y="347.3" width="15" height="31.0" fill="#87cbe8"/><rect x="278.2" y="318.5" width="15" height="1.5" fill="#e23b30"/><rect x="278.2" y="320.0" width="15" height="41.4" fill="#f9c21e"/><rect x="278.2" y="361.4" width="15" height="27.7" fill="#87cbe8"/><rect x="278.2" y="389.1" width="15" height="16.8" fill="#b83030"/><rect x="295.2" y="318.5" width="15" height="1.1" fill="#e23b30"/><rect x="295.2" y="319.6" width="15" height="42.6" fill="#f9c21e"/><rect x="295.2" y="362.2" width="15" height="31.5" fill="#87cbe8"/><rect x="295.2" y="393.7" width="15" height="20.4" fill="#b83030"/><rect x="312.2" y="318.5" width="15" height="0.6" fill="#e23b30"/><rect x="312.2" y="319.1" width="15" height="44.3" fill="#f9c21e"/><rect x="312.2" y="363.4" width="15" height="13.3" fill="#87cbe8"/><rect x="312.2" y="376.7" width="15" height="8.8" fill="#b83030"/><rect x="329.2" y="318.5" width="15" height="38.8" fill="#f9c21e"/><rect x="346.2" y="318.5" width="15" height="38.0" fill="#f9c21e"/><rect x="363.2" y="318.5" width="15" height="35.7" fill="#f9c21e"/><rect x="380.2" y="318.5" width="15" height="34.4" fill="#f9c21e"/><rect x="397.2" y="318.5" width="15" height="34.4" fill="#f9c21e"/><rect x="414.2" y="318.5" width="15" height="33.5" fill="#f9c21e"/><rect x="431.2" y="318.5" width="15" height="33.9" fill="#f9c21e"/><rect x="448.2" y="318.5" width="15" height="34.4" fill="#f9c21e"/><rect x="465.2" y="318.5" width="15" height="33.4" fill="#f9c21e"/><rect x="482.2" y="318.5" width="15" height="16.2" fill="#f9c21e"/><rect x="499.2" y="318.5" width="15" height="16.9" fill="#f9c21e"/><rect x="516.2" y="318.5" width="15" height="17.2" fill="#f9c21e"/><rect x="533.2" y="318.5" width="15" height="17.2" fill="#f9c21e"/><rect x="550.2" y="318.5" width="15" height="16.9" fill="#f9c21e"/><rect x="567.2" y="318.5" width="15" height="16.4" fill="#f9c21e"/><rect x="584.2" y="318.5" width="15" height="16.1" fill="#f9c21e"/><rect x="601.2" y="318.5" width="15" height="17.2" fill="#f9c21e"/><rect x="618.2" y="318.5" width="15" height="20.7" fill="#f9c21e"/><rect x="635.2" y="318.5" width="15" height="19.4" fill="#f9c21e"/><rect x="652.2" y="318.5" width="15" height="16.1" fill="#f9c21e"/><polyline points="166.4,317.8 183.4,317.8 200.4,317.8 217.4,317.8 234.4,317.8 251.4,312.2 268.4,313.8 285.4,315.4 302.4,316.0 319.4,316.4 336.4,316.6 353.4,316.8 370.4,316.9 387.4,317.0 404.4,317.1 421.4,317.2 438.4,317.3 455.4,317.4 472.4,317.5 489.4,317.5 506.4,317.6 523.4,317.6 540.4,317.7 557.4,317.7 574.4,317.8 591.4,317.8 608.4,317.8 625.4,317.8 642.4,317.8 659.4,317.8 676.4,317.8" fill="none" stroke="#1abc9c" stroke-width="1.2" stroke-linejoin="round"/><g fill="#a6a6a6"><rect x="174.2" y="436.3" width="1.4" height="1.4"/><rect x="191.2" y="436.3" width="1.4" height="1.4"/><rect x="208.2" y="436.3" width="1.4" height="1.4"/><rect x="225.2" y="436.3" width="1.4" height="1.4"/><rect x="242.2" y="436.3" width="1.4" height="1.4"/><rect x="259.2" y="436.3" width="1.4" height="1.4"/><rect x="276.2" y="436.3" width="1.4" height="1.4"/><rect x="293.2" y="436.3" width="1.4" height="1.4"/><rect x="310.2" y="436.3" width="1.4" height="1.4"/><rect x="327.2" y="436.3" width="1.4" height="1.4"/><rect x="344.2" y="436.3" width="1.4" height="1.4"/><rect x="361.2" y="436.3" width="1.4" height="1.4"/><rect x="378.2" y="436.3" width="1.4" height="1.4"/><rect x="395.2" y="436.3" width="1.4" height="1.4"/><rect x="412.2" y="436.3" width="1.4" height="1.4"/><rect x="429.2" y="436.3" width="1.4" height="1.4"/><rect x="446.2" y="436.3" width="1.4" height="1.4"/><rect x="463.2" y="436.3" width="1.4" height="1.4"/><rect x="480.2" y="436.3" width="1.4" height="1.4"/><rect x="497.2" y="436.3" width="1.4" height="1.4"/><rect x="514.2" y="436.3" width="1.4" height="1.4"/><rect x="531.2" y="436.3" width="1.4" height="1.4"/><rect x="548.2" y="436.3" width="1.4" height="1.4"/><rect x="565.2" y="436.3" width="1.4" height="1.4"/><rect x="582.2" y="436.3" width="1.4" height="1.4"/><rect x="599.2" y="436.3" width="1.4" height="1.4"/><rect x="616.2" y="436.3" width="1.4" height="1.4"/><rect x="633.2" y="436.3" width="1.4" height="1.4"/><rect x="650.2" y="436.3" width="1.4" height="1.4"/><rect x="667.2" y="436.3" width="1.4" height="1.4"/><rect x="684.2" y="436.3" width="1.4" height="1.4"/></g><line x1="695.8" y1="236.4" x2="702.8" y2="236.4" stroke="#2e86c1" stroke-width="1.1"/><line x1="695.8" y1="244.9" x2="702.8" y2="244.9" stroke="#1abc9c" stroke-width="1.1"/><line x1="695.8" y1="253.5" x2="702.8" y2="253.5" stroke="#8e44c8" stroke-width="1.1"/><line x1="695.8" y1="262.0" x2="702.8" y2="262.0" stroke="#ccd2d4" stroke-width="1.1"/><line x1="695.8" y1="270.5" x2="702.8" y2="270.5" stroke="#f4d03f" stroke-width="1.1"/><line x1="695.8" y1="279.0" x2="702.8" y2="279.0" stroke="#28a745" stroke-width="1.1"/><line x1="695.8" y1="287.6" x2="702.8" y2="287.6" stroke="#8d6e63" stroke-width="1.1"/><circle cx="699.4" cy="296.1" r="2.1" fill="#e8301c"/><circle cx="699.4" cy="304.6" r="2.1" fill="#ffc107"/><circle cx="699.4" cy="313.1" r="2.1" fill="#6cc0ea"/><circle cx="699.4" cy="321.6" r="2.1" fill="#a51616"/><circle cx="699.4" cy="330.2" r="2.1" fill="#ff8c00"/></svg>
<div class="tl"><span class="t" style="font-size:7.0px;line-height:7.0px;color:#2b6fc0;transform:translate(19.90px,28.99px) rotate(0.2deg) scaleX(0.9106);">Project list</span>
<span class="t" style="font-size:5.9px;line-height:5.9px;color:#151515;transform:translate(36.20px,49.91px) rotate(0.2deg) scaleX(0.8850);">Assumptions [24Q3]</span>
<span class="t" style="font-size:5.9px;line-height:5.9px;color:#151515;transform:translate(36.20px,58.41px) rotate(0.2deg) scaleX(0.8850);">Tax regimes</span>
<span class="t" style="font-size:5.9px;line-height:5.9px;color:#151515;transform:translate(36.20px,66.91px) rotate(0.2deg) scaleX(0.8850);text-decoration:underline;text-decoration-thickness:0.45px;text-underline-offset:0.5px;text-decoration-color:#777;">External profiles</span>
<span class="t" style="font-size:5.9px;line-height:5.9px;color:#151515;transform:translate(36.20px,75.41px) rotate(0.2deg) scaleX(0.8850);">Analyses</span>
<span class="t" style="font-size:5.9px;line-height:5.9px;color:#151515;transform:translate(43.75px,83.91px) rotate(0.2deg) scaleX(0.8850);">Arboretum Maximus</span>
<span class="t" style="font-size:5.9px;line-height:5.9px;color:#151515;transform:translate(51.30px,92.41px) rotate(0.2deg) scaleX(0.8850);">Reports</span>
<span class="t" style="font-size:5.9px;line-height:5.9px;color:#151515;transform:translate(58.85px,100.91px) rotate(0.2deg) scaleX(0.8850);">Deterministic</span>
<span class="t" style="font-size:5.9px;line-height:5.9px;color:#151515;transform:translate(66.60px,109.41px) rotate(0.2deg) scaleX(0.8850);text-decoration:underline;text-decoration-thickness:0.45px;text-underline-offset:0.5px;text-decoration-color:#777;">Summary</span>
<span class="t" style="font-size:5.9px;line-height:5.9px;color:#151515;transform:translate(66.60px,117.91px) rotate(0.2deg) scaleX(0.8850);text-decoration:underline;text-decoration-thickness:0.45px;text-underline-offset:0.5px;text-decoration-color:#777;">Cashflow</span>
<span class="t" style="font-size:5.9px;line-height:5.9px;color:#151515;transform:translate(66.60px,126.41px) rotate(0.2deg) scaleX(0.8850);text-decoration:underline;text-decoration-thickness:0.45px;text-underline-offset:0.5px;text-decoration-color:#777;">Plot</span>
<span class="t" style="font-size:5.9px;line-height:5.9px;color:#151515;transform:translate(66.60px,134.91px) rotate(0.2deg) scaleX(0.8850);text-decoration:underline;text-decoration-thickness:0.45px;text-underline-offset:0.5px;text-decoration-color:#777;">Rank</span>
<span class="t" style="font-size:5.9px;line-height:5.9px;color:#151515;transform:translate(66.60px,143.41px) rotate(0.2deg) scaleX(0.8850);text-decoration:underline;text-decoration-thickness:0.45px;text-underline-offset:0.5px;text-decoration-color:#777;">Profiles</span>
<span class="t" style="font-size:5.9px;line-height:5.9px;color:#151515;transform:translate(66.60px,151.91px) rotate(0.2deg) scaleX(0.8850);text-decoration:underline;text-decoration-thickness:0.45px;text-underline-offset:0.5px;text-decoration-color:#777;">Dashboard</span>
<span class="t" style="font-size:5.9px;line-height:5.9px;color:#151515;transform:translate(66.60px,160.41px) rotate(0.2deg) scaleX(0.8850);">User defined reports</span>
<span class="t" style="font-size:5.9px;line-height:5.9px;color:#151515;transform:translate(58.85px,168.91px) rotate(0.2deg) scaleX(0.8850);">Stochastic</span>
<span class="t" style="font-size:5.9px;line-height:5.9px;color:#151515;transform:translate(58.85px,177.41px) rotate(0.2deg) scaleX(0.8850);">Sensitivities</span>
<span class="t" style="font-size:5.9px;line-height:5.9px;color:#151515;transform:translate(51.30px,185.91px) rotate(0.2deg) scaleX(0.8850);">Settings</span>
<span class="t" style="font-size:5.9px;line-height:5.9px;color:#151515;transform:translate(51.30px,194.41px) rotate(0.2deg) scaleX(0.8850);">Contents</span>
<span class="t" style="font-size:5.7px;line-height:5.7px;color:#151515;transform:translate(126.20px,27.55px) rotate(0.2deg) scaleX(0.8893);-webkit-text-stroke:0.05px #151515;">Arboretum Maxim</span>
<span class="t" style="font-size:5.7px;line-height:5.7px;color:#151515;transform:translate(126.20px,33.75px) rotate(0.2deg) scaleX(0.8850);-webkit-text-stroke:0.05px #151515;">Plot (D)</span>
<span class="t" style="font-size:6.2px;line-height:6.2px;color:#151515;transform:translate(168.60px,27.93px) rotate(0.2deg) scaleX(0.9500);-webkit-text-stroke:0.05px #151515;">x</span>
<span class="t" style="font-size:5.7px;line-height:5.7px;color:#151515;transform:translate(179.80px,27.55px) rotate(0.2deg) scaleX(0.8893);-webkit-text-stroke:0.05px #151515;">Arboretum Maxim</span>
<span class="t" style="font-size:5.7px;line-height:5.7px;color:#151515;transform:translate(179.80px,33.75px) rotate(0.2deg) scaleX(0.8850);-webkit-text-stroke:0.05px #151515;">Cashflow (D)</span>
<span class="t" style="font-size:6.2px;line-height:6.2px;color:#151515;transform:translate(221.40px,27.93px) rotate(0.2deg) scaleX(0.9500);-webkit-text-stroke:0.05px #151515;">x</span>
<span class="t" style="font-size:5.7px;line-height:5.7px;color:#151515;transform:translate(232.70px,27.55px) rotate(0.2deg) scaleX(0.8893);-webkit-text-stroke:0.05px #151515;">Arboretum Maxim</span>
<span class="t" style="font-size:5.7px;line-height:5.7px;color:#151515;transform:translate(232.70px,33.75px) rotate(0.2deg) scaleX(0.8850);-webkit-text-stroke:0.05px #151515;">Summary (D)</span>
<span class="t" style="font-size:6.2px;line-height:6.2px;color:#151515;transform:translate(274.70px,27.93px) rotate(0.2deg) scaleX(0.9500);-webkit-text-stroke:0.05px #151515;">x</span>
<span class="t" style="font-size:5.7px;line-height:5.7px;color:#151515;transform:translate(285.92px,30.45px) rotate(0.2deg) scaleX(0.8850);-webkit-text-stroke:0.05px #151515;">Start</span>
<span class="t" style="font-size:5.3px;line-height:5.3px;color:#1a1a1a;transform:translate(128.90px,43.92px) rotate(0.2deg) scaleX(0.8850);">Term</span>
<span class="t" style="font-size:5.3px;line-height:5.3px;color:#1a1a1a;transform:translate(135.20px,50.42px) rotate(0.2deg) scaleX(0.8233);text-decoration:underline;text-decoration-thickness:0.45px;text-underline-offset:0.5px;text-decoration-color:#777;">Real (2025)</span>
<span class="t" style="font-size:5.3px;line-height:5.3px;color:#1a1a1a;transform:translate(135.20px,56.82px) rotate(0.2deg) scaleX(0.9002);">Nominal</span>
<span class="t" style="font-size:5.3px;line-height:5.3px;color:#1a1a1a;transform:translate(166.00px,44.02px) rotate(0.2deg) scaleX(0.8850);">View</span>
<span class="t" style="font-size:5.3px;line-height:5.3px;color:#1a1a1a;transform:translate(165.70px,55.32px) rotate(0.2deg) scaleX(0.8788);">Category</span>
<span class="t" style="font-size:5.3px;line-height:5.3px;color:#1a1a1a;transform:translate(187.90px,55.22px) rotate(0.2deg) scaleX(0.8850);">Cashflow</span>
<span class="t" style="font-size:5.3px;line-height:5.3px;color:#1a1a1a;transform:translate(238.40px,55.32px) rotate(0.2deg) scaleX(0.9073);">Select report profiles</span>
<span class="t" style="font-size:5.3px;line-height:5.3px;color:#1a1a1a;transform:translate(291.20px,55.32px) rotate(0.2deg) scaleX(0.8834);">Chart type</span>
<span class="t" style="font-size:5.3px;line-height:5.3px;color:#1a1a1a;transform:translate(315.80px,55.22px) rotate(0.2deg) scaleX(0.8874);">StackedColumn</span>
<span class="t" style="font-size:5.3px;line-height:5.3px;color:#1a1a1a;transform:translate(370.90px,44.12px) rotate(0.2deg) scaleX(0.8789);">Manual Y-axis scaling</span>
<span class="t" style="font-size:5.3px;line-height:5.3px;color:#1a1a1a;transform:translate(377.20px,55.32px) rotate(0.2deg) scaleX(0.8964);">Activate</span>
<span class="t" style="font-size:5.3px;line-height:5.3px;color:#1a1a1a;transform:translate(397.30px,50.92px) rotate(0.2deg) scaleX(0.8850);">Min</span>
<span class="t" style="font-size:5.3px;line-height:5.3px;color:#1a1a1a;transform:translate(417.70px,50.92px) rotate(0.2deg) scaleX(0.8850);">Max</span>
<span class="t" style="font-size:5.3px;line-height:5.3px;color:#1a1a1a;transform:translate(437.60px,50.92px) rotate(0.2deg) scaleX(0.8850);">Step</span>
<span class="t" style="font-size:5.3px;line-height:5.3px;color:#1a1a1a;transform:translate(399.10px,58.52px) rotate(0.2deg) scaleX(0.8850);clip-path:inset(0 1.5px 0 0);">-20659(</span>
<span class="t" style="font-size:5.3px;line-height:5.3px;color:#1a1a1a;transform:translate(418.90px,58.52px) rotate(0.2deg) scaleX(0.8850);">734622</span>
<span class="t" style="font-size:5.3px;line-height:5.3px;color:#1a1a1a;transform:translate(438.80px,58.52px) rotate(0.2deg) scaleX(0.8850);">0</span>
<span class="t" style="font-size:5.3px;line-height:5.3px;color:#1a1a1a;transform:translate(135.80px,71.62px) rotate(0.2deg) scaleX(0.8706);">Analysis parameters</span>
<span class="t" style="font-size:11.3px;line-height:11.3px;color:#1c1c1c;transform:translate(430.30px,84.14px) rotate(0.2deg) scaleX(0.9510);-webkit-text-stroke:0.32px #1c1c1c;">Cashflow</span>
<span class="t" style="font-size:7.3px;line-height:7.3px;color:#6a6a6a;transform:translate(422.20px,101.16px) rotate(0.2deg) scaleX(0.9309);">Arboretum Maximus</span>
<span class="t" style="font-size:5.6px;line-height:5.6px;color:#2a2a2a;transform:translate(141.80px,138.99px) rotate(0.2deg) scaleX(0.8348);">600000</span>
<span class="t" style="font-size:5.6px;line-height:5.6px;color:#2a2a2a;transform:translate(141.80px,198.09px) rotate(0.2deg) scaleX(0.8348);">400000</span>
<span class="t" style="font-size:5.6px;line-height:5.6px;color:#2a2a2a;transform:translate(141.80px,257.09px) rotate(0.2deg) scaleX(0.8348);">200000</span>
<span class="t" style="font-size:5.6px;line-height:5.6px;color:#2a2a2a;transform:translate(148.15px,315.99px) rotate(0.2deg) scaleX(0.9311);">0</span>
<span class="t" style="font-size:5.6px;line-height:5.6px;color:#2a2a2a;transform:translate(140.70px,374.99px) rotate(0.2deg) scaleX(0.8661);">-200000</span>
<span class="t" style="font-size:5.6px;line-height:5.6px;color:#2a2a2a;transform:translate(140.70px,433.99px) rotate(0.2deg) scaleX(0.8661);">-400000</span>
<span class="t" style="font-size:8px;line-height:8px;color:#1f1f1f;transform:translate(131.0px,298.80px) rotate(-90.2deg) scaleX(0.9951);-webkit-text-stroke:0.25px #1f1f1f;">Mill NOK</span>
<span class="t" style="font-size:5.4px;line-height:5.4px;color:#3a3a3a;transform:translate(168.60px,438.0px) rotate(90.2deg) scaleX(0.84);">2025</span>
<span class="t" style="font-size:5.4px;line-height:5.4px;color:#3a3a3a;transform:translate(185.60px,438.0px) rotate(90.2deg) scaleX(0.84);">2026</span>
<span class="t" style="font-size:5.4px;line-height:5.4px;color:#3a3a3a;transform:translate(202.60px,438.0px) rotate(90.2deg) scaleX(0.84);">2027</span>
<span class="t" style="font-size:5.4px;line-height:5.4px;color:#3a3a3a;transform:translate(219.60px,438.0px) rotate(90.2deg) scaleX(0.84);">2028</span>
<span class="t" style="font-size:5.4px;line-height:5.4px;color:#3a3a3a;transform:translate(236.60px,438.0px) rotate(90.2deg) scaleX(0.84);">2029</span>
<span class="t" style="font-size:5.4px;line-height:5.4px;color:#3a3a3a;transform:translate(253.60px,438.0px) rotate(90.2deg) scaleX(0.84);">2030</span>
<span class="t" style="font-size:5.4px;line-height:5.4px;color:#3a3a3a;transform:translate(270.60px,438.0px) rotate(90.2deg) scaleX(0.84);">2031</span>
<span class="t" style="font-size:5.4px;line-height:5.4px;color:#3a3a3a;transform:translate(287.60px,438.0px) rotate(90.2deg) scaleX(0.84);">2032</span>
<span class="t" style="font-size:5.4px;line-height:5.4px;color:#3a3a3a;transform:translate(304.60px,438.0px) rotate(90.2deg) scaleX(0.84);">2033</span>
<span class="t" style="font-size:5.4px;line-height:5.4px;color:#3a3a3a;transform:translate(321.60px,438.0px) rotate(90.2deg) scaleX(0.84);">2034</span>
<span class="t" style="font-size:5.4px;line-height:5.4px;color:#3a3a3a;transform:translate(338.60px,438.0px) rotate(90.2deg) scaleX(0.84);">2035</span>
<span class="t" style="font-size:5.4px;line-height:5.4px;color:#3a3a3a;transform:translate(355.60px,438.0px) rotate(90.2deg) scaleX(0.84);">2036</span>
<span class="t" style="font-size:5.4px;line-height:5.4px;color:#3a3a3a;transform:translate(372.60px,438.0px) rotate(90.2deg) scaleX(0.84);">2037</span>
<span class="t" style="font-size:5.4px;line-height:5.4px;color:#3a3a3a;transform:translate(389.60px,438.0px) rotate(90.2deg) scaleX(0.84);">2038</span>
<span class="t" style="font-size:5.4px;line-height:5.4px;color:#3a3a3a;transform:translate(406.60px,438.0px) rotate(90.2deg) scaleX(0.84);">2039</span>
<span class="t" style="font-size:5.4px;line-height:5.4px;color:#3a3a3a;transform:translate(423.60px,438.0px) rotate(90.2deg) scaleX(0.84);">2040</span>
<span class="t" style="font-size:5.4px;line-height:5.4px;color:#3a3a3a;transform:translate(440.60px,438.0px) rotate(90.2deg) scaleX(0.84);">2041</span>
<span class="t" style="font-size:5.4px;line-height:5.4px;color:#3a3a3a;transform:translate(457.60px,438.0px) rotate(90.2deg) scaleX(0.84);">2042</span>
<span class="t" style="font-size:5.4px;line-height:5.4px;color:#3a3a3a;transform:translate(474.60px,438.0px) rotate(90.2deg) scaleX(0.84);">2043</span>
<span class="t" style="font-size:5.4px;line-height:5.4px;color:#3a3a3a;transform:translate(491.60px,438.0px) rotate(90.2deg) scaleX(0.84);">2044</span>
<span class="t" style="font-size:5.4px;line-height:5.4px;color:#3a3a3a;transform:translate(508.60px,438.0px) rotate(90.2deg) scaleX(0.84);">2045</span>
<span class="t" style="font-size:5.4px;line-height:5.4px;color:#3a3a3a;transform:translate(525.60px,438.0px) rotate(90.2deg) scaleX(0.84);">2046</span>
<span class="t" style="font-size:5.4px;line-height:5.4px;color:#3a3a3a;transform:translate(542.60px,438.0px) rotate(90.2deg) scaleX(0.84);">2047</span>
<span class="t" style="font-size:5.4px;line-height:5.4px;color:#3a3a3a;transform:translate(559.60px,438.0px) rotate(90.2deg) scaleX(0.84);">2048</span>
<span class="t" style="font-size:5.4px;line-height:5.4px;color:#3a3a3a;transform:translate(576.60px,438.0px) rotate(90.2deg) scaleX(0.84);">2049</span>
<span class="t" style="font-size:5.4px;line-height:5.4px;color:#3a3a3a;transform:translate(593.60px,438.0px) rotate(90.2deg) scaleX(0.84);">2050</span>
<span class="t" style="font-size:5.4px;line-height:5.4px;color:#3a3a3a;transform:translate(610.60px,438.0px) rotate(90.2deg) scaleX(0.84);">2051</span>
<span class="t" style="font-size:5.4px;line-height:5.4px;color:#3a3a3a;transform:translate(627.60px,438.0px) rotate(90.2deg) scaleX(0.84);">2052</span>
<span class="t" style="font-size:5.4px;line-height:5.4px;color:#3a3a3a;transform:translate(644.60px,438.0px) rotate(90.2deg) scaleX(0.84);">2053</span>
<span class="t" style="font-size:5.4px;line-height:5.4px;color:#3a3a3a;transform:translate(661.60px,438.0px) rotate(90.2deg) scaleX(0.84);">2054</span>
<span class="t" style="font-size:5.4px;line-height:5.4px;color:#3a3a3a;transform:translate(678.60px,438.0px) rotate(90.2deg) scaleX(0.84);">2055</span>
<span class="t" style="font-size:8.2px;line-height:8.2px;color:#1f1f1f;transform:translate(444.95px,459.67px) rotate(0.2deg) scaleX(0.8993);-webkit-text-stroke:0.2px #1f1f1f;">Year</span>
<span class="t" style="font-size:5.2px;line-height:5.2px;color:#3c3c3c;transform:translate(705.50px,234.26px) rotate(0.2deg) scaleX(0.8593);font-family:'DejaVu Sans','Liberation Sans',sans-serif;">Oil</span>
<span class="t" style="font-size:5.2px;line-height:5.2px;color:#3c3c3c;transform:translate(705.50px,242.79px) rotate(0.2deg) scaleX(0.8262);font-family:'DejaVu Sans','Liberation Sans',sans-serif;">Gas</span>
<span class="t" style="font-size:5.2px;line-height:5.2px;color:#3c3c3c;transform:translate(705.50px,251.31px) rotate(0.2deg) scaleX(0.8458);font-family:'DejaVu Sans','Liberation Sans',sans-serif;">Before tax</span>
<span class="t" style="font-size:5.2px;line-height:5.2px;color:#3c3c3c;transform:translate(705.50px,259.84px) rotate(0.2deg) scaleX(0.8455);font-family:'DejaVu Sans','Liberation Sans',sans-serif;">After tax Unconsolidated</span>
<span class="t" style="font-size:5.2px;line-height:5.2px;color:#3c3c3c;transform:translate(705.50px,268.36px) rotate(0.2deg) scaleX(0.8522);font-family:'DejaVu Sans','Liberation Sans',sans-serif;">After tax Special</span>
<span class="t" style="font-size:5.2px;line-height:5.2px;color:#3c3c3c;transform:translate(705.50px,276.89px) rotate(0.2deg) scaleX(0.8585);font-family:'DejaVu Sans','Liberation Sans',sans-serif;">After tax 100% tax position</span>
<span class="t" style="font-size:5.2px;line-height:5.2px;color:#3c3c3c;transform:translate(705.50px,285.41px) rotate(0.2deg) scaleX(0.8498);font-family:'DejaVu Sans','Liberation Sans',sans-serif;">After tax Consolidated</span>
<span class="t" style="font-size:5.2px;line-height:5.2px;color:#3c3c3c;transform:translate(705.50px,293.94px) rotate(0.2deg) scaleX(0.8615);font-family:'DejaVu Sans','Liberation Sans',sans-serif;">Tariffs OPEX</span>
<span class="t" style="font-size:5.2px;line-height:5.2px;color:#3c3c3c;transform:translate(705.50px,302.46px) rotate(0.2deg) scaleX(0.8431);font-family:'DejaVu Sans','Liberation Sans',sans-serif;">Ordinary OPEX</span>
<span class="t" style="font-size:5.2px;line-height:5.2px;color:#3c3c3c;transform:translate(705.50px,310.99px) rotate(0.2deg) scaleX(0.8441);font-family:'DejaVu Sans','Liberation Sans',sans-serif;">Facilities CAPEX</span>
<span class="t" style="font-size:5.2px;line-height:5.2px;color:#3c3c3c;transform:translate(705.50px,319.51px) rotate(0.2deg) scaleX(0.8441);font-family:'DejaVu Sans','Liberation Sans',sans-serif;">Wells CAPEX</span>
<span class="t" style="font-size:5.2px;line-height:5.2px;color:#3c3c3c;transform:translate(705.50px,328.04px) rotate(0.2deg) scaleX(0.8434);font-family:'DejaVu Sans','Liberation Sans',sans-serif;">Exploration &amp; Appraisal CAPEX</span></div>
</div>
</body></html>
